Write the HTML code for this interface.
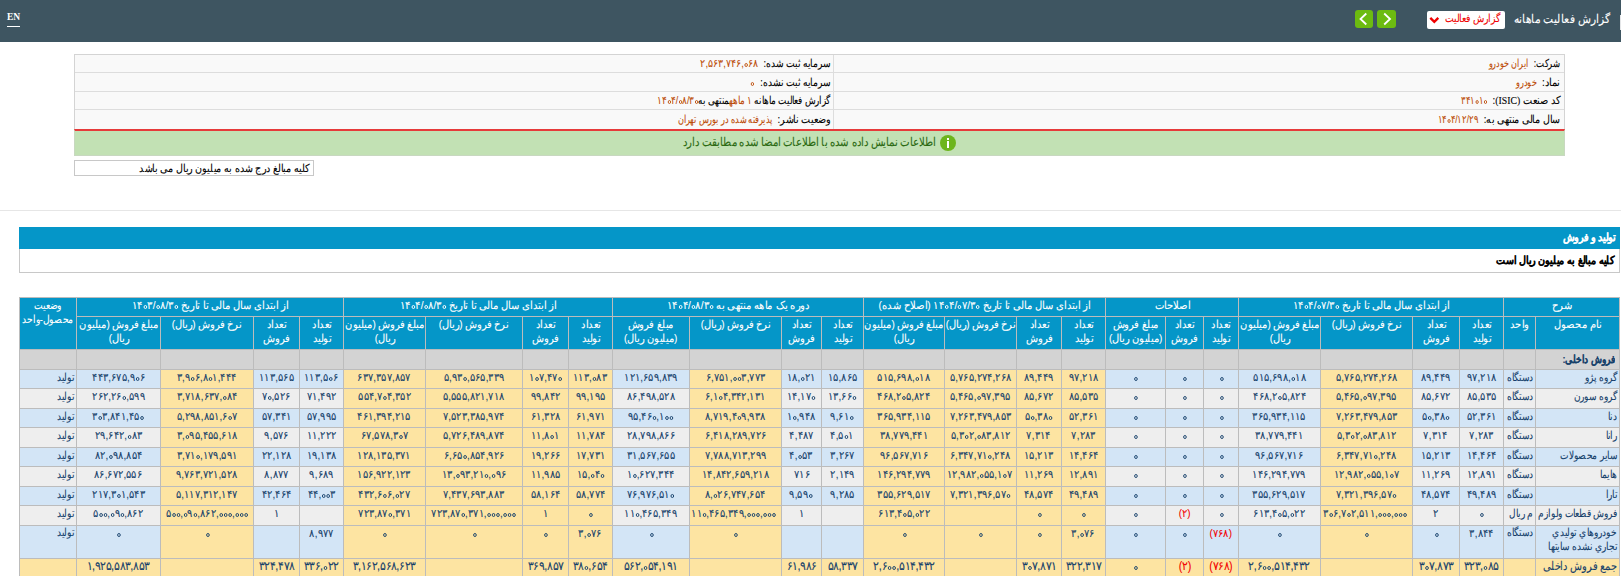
<!DOCTYPE html>
<html lang="fa" dir="rtl">
<head>
<meta charset="utf-8">
<title>گزارش فعالیت ماهانه</title>
<style>
html,body{margin:0;padding:0;}
body{width:1621px;height:576px;overflow:hidden;position:relative;background:#fff;font-family:"Liberation Sans",sans-serif;font-size:11px;color:#000;}
.a{position:absolute;overflow:hidden;}
.abs{position:absolute;white-space:nowrap;}
.s{display:inline-block;white-space:nowrap;-webkit-text-stroke:0.1px currentColor;}
.n{direction:ltr;unicode-bidi:isolate;}
.z{display:inline-block;width:4px;height:4px;border:1.1px solid currentColor;border-radius:50%;box-sizing:border-box;margin:0 .5px;vertical-align:0px;-webkit-text-stroke:0;}
</style>
</head>
<body>
<div class="abs" style="left:0;top:0;width:1621px;height:42px;background:#3e5561;"></div>
<div class="abs" style="left:7px;top:11px;font-family:'Liberation Serif',serif;font-size:9.5px;font-weight:bold;letter-spacing:-0.2px;color:#fff;line-height:12px;direction:ltr;">EN</div>
<div class="abs" style="left:7px;top:26px;width:13px;height:1px;background:#fff;"></div>
<div class="abs" style="right:10.5px;top:10.5px;line-height:16px;color:#fff;"><span class="s" style="font-size:12px;transform:scaleX(0.8880);transform-origin:100% 50%;">گزارش فعالیت ماهانه</span></div>
<div class="abs" style="left:1620px;top:15px;width:1px;height:15px;background:#e4e6e8;"></div>
<div class="abs" style="left:1427px;top:11px;width:78px;height:18px;background:#fff;border-radius:2px;"></div>
<div class="abs" style="right:121px;top:10.0px;line-height:16px;color:#f00000;"><span class="s" style="font-size:11px;transform:scaleX(0.8453);transform-origin:100% 50%;">گزارش فعالیت</span></div>
<div class="abs" style="left:1429px;top:16px;"><svg width="11" height="8" viewBox="0 0 11 8" style="display:block"><path d="M1.3 1.8 L5.3 5.8 L9.3 1.8" stroke="#f00000" stroke-width="2.4" fill="none"/></svg></div>
<div class="abs" style="left:1355px;top:10px;width:18px;height:18px;background:#6cbb10;border-radius:3px;"></div>
<div class="abs" style="left:1377px;top:10px;width:19px;height:18px;background:#6cbb10;border-radius:3px;"></div>
<div class="abs" style="left:1355px;top:10px;"><svg width="18" height="18" viewBox="0 0 18 18" style="display:block"><path d="M11.3 3.5 L5.5 9 L11.3 14.5" stroke="#fff" stroke-width="1.8" fill="none"/></svg></div>
<div class="abs" style="left:1377px;top:10px;"><svg width="19" height="18" viewBox="0 0 19 18" style="display:block"><path d="M7.2 3.5 L13 9 L7.2 14.5" stroke="#fff" stroke-width="1.8" fill="none"/></svg></div>
<div class="abs" style="left:74px;top:54px;width:1489px;height:74px;border:1px solid #d4d4d4;border-bottom:none;background:#f9f9f9;"></div>
<div class="abs" style="left:75px;top:72px;width:1489px;height:1px;background:#dddddd;"></div>
<div class="abs" style="left:75px;top:91px;width:1489px;height:1px;background:#dddddd;"></div>
<div class="abs" style="left:75px;top:109px;width:1489px;height:1px;background:#dddddd;"></div>
<div class="abs" style="left:833px;top:55px;width:1px;height:74px;background:#dddddd;"></div>
<div class="abs" style="right:61px;top:55.0px;line-height:16px;color:#000;"><span class="s" style="font-size:11px;transform:scaleX(0.7750);transform-origin:100% 50%;">شرکت:</span></div>
<div class="abs" style="right:92.79999999999995px;top:55.0px;line-height:16px;color:#bc4c08;"><span class="s" style="font-size:11px;transform:scaleX(0.7306);transform-origin:100% 50%;">ایران خودرو</span></div>
<div class="abs" style="right:61px;top:73.5px;line-height:16px;color:#000;"><span class="s" style="font-size:11px;transform:scaleX(0.8972);transform-origin:100% 50%;">نماد:</span></div>
<div class="abs" style="right:84.5px;top:73.5px;line-height:16px;color:#bc4c08;"><span class="s" style="font-size:11px;transform:scaleX(0.7357);transform-origin:100% 50%;">خودرو</span></div>
<div class="abs" style="right:61px;top:92.0px;line-height:16px;color:#000;"><span class="s" style="font-size:11px;transform:scaleX(0.8871);transform-origin:100% 50%;">کد صنعت <span style="font-family:'Liberation Serif',serif">(ISIC)</span>:</span></div>
<div class="abs" style="right:134.5px;top:92.0px;line-height:16px;color:#bc4c08;"><span class="s" style="font-size:11px;transform:scaleX(0.7588);transform-origin:100% 50%;"><span class="n">۳۴۱<i class="z"></i>۱<i class="z"></i></span></span></div>
<div class="abs" style="right:61px;top:110.5px;line-height:16px;color:#000;"><span class="s" style="font-size:11px;transform:scaleX(0.8670);transform-origin:100% 50%;">سال مالی منتهی به:</span></div>
<div class="abs" style="right:142.79999999999995px;top:110.5px;line-height:16px;color:#bc4c08;"><span class="s" style="font-size:11px;transform:scaleX(0.7624);transform-origin:100% 50%;"><span class="n">۱۴<i class="z"></i>۴/۱۲/۲۹</span></span></div>
<div class="abs" style="right:791px;top:55.0px;line-height:16px;color:#000;"><span class="s" style="font-size:11px;transform:scaleX(0.8307);transform-origin:100% 50%;">سرمایه ثبت شده:</span></div>
<div class="abs" style="right:863.2px;top:55.0px;line-height:16px;color:#bc4c08;"><span class="s" style="font-size:11px;transform:scaleX(0.8479);transform-origin:100% 50%;"><span class="n">۲,۵۶۳,۷۴۶,<i class="z"></i>۶۸</span></span></div>
<div class="abs" style="right:791px;top:73.5px;line-height:16px;color:#000;"><span class="s" style="font-size:11px;transform:scaleX(0.8316);transform-origin:100% 50%;">سرمایه ثبت نشده:</span></div>
<div class="abs" style="right:867px;top:73.5px;line-height:16px;color:#bc4c08;"><span class="s" style="font-size:11px;transform:scaleX(0.8);transform-origin:100% 50%;"><span class="n"><i class="z"></i></span></span></div>
<div class="abs" style="right:791px;top:110.5px;line-height:16px;color:#000;"><span class="s" style="font-size:11px;transform:scaleX(0.8732);transform-origin:100% 50%;">وضعیت ناشر:</span></div>
<div class="abs" style="right:849px;top:110.5px;line-height:16px;color:#bc4c08;"><span class="s" style="font-size:11px;transform:scaleX(0.7427);transform-origin:100% 50%;">پذیرفته شده در بورس تهران</span></div>
<div class="abs" style="right:791px;top:92.0px;line-height:16px;color:#000;"><span class="s" style="font-size:11px;transform:scaleX(0.7994);transform-origin:100% 50%;">گزارش فعالیت ماهانه <span style="color:#bc4c08">۱ ماهه</span>منتهی به<span style="color:#bc4c08"><span class="n">۱۴<i class="z"></i>۴/<i class="z"></i>۸/۳<i class="z"></i></span></span></span></div>
<div class="abs" style="left:74px;top:129px;width:1489px;height:24px;background:#c2e1b4;border:1px solid #c8d8c0;border-top:2px solid #e63a3a;"></div>
<div class="abs" style="left:940px;top:135px;width:16px;height:16px;border-radius:50%;background:#6db51d;"></div>
<div class="abs" style="left:947px;top:138px;width:2px;height:2px;background:#fff;"></div>
<div class="abs" style="left:947px;top:141px;width:2px;height:7px;background:#fff;"></div>
<div class="abs" style="right:684.5px;top:134.0px;line-height:16px;color:#2b6a12;"><span class="s" style="font-size:12px;transform:scaleX(0.8461);transform-origin:100% 50%;">اطلاعات نمایش داده شده با اطلاعات امضا شده مطابقت دارد</span></div>
<div class="abs" style="left:74px;top:160px;width:238px;height:14px;border:1px solid #c8c8c8;background:#fff;"></div>
<div class="abs" style="right:1311.5px;top:160.0px;line-height:16px;color:#000;"><span class="s" style="font-size:11px;transform:scaleX(0.8698);transform-origin:100% 50%;">کلیه مبالغ درج شده به میلیون ریال می باشد</span></div>
<div class="abs" style="left:0;top:210px;width:1621px;height:1px;background:#e6e6e6;"></div>
<div class="abs" style="left:19px;top:227px;width:1601px;height:22px;background:#0596c8;"></div>
<div class="abs" style="right:4.5px;top:228.5px;line-height:16px;color:#fff;"><span class="s" style="font-size:11px;transform:scaleX(0.8720);transform-origin:100% 50%;font-weight:bold;">تولید و فروش</span></div>
<div class="abs" style="left:19px;top:249px;width:1599px;height:23px;border:1px solid #c8c8c8;border-top:none;background:#fff;"></div>
<div class="abs" style="right:6.5px;top:251.5px;line-height:16px;color:#000;"><span class="s" style="font-size:11px;transform:scaleX(0.8723);transform-origin:100% 50%;font-weight:bold;">کلیه مبالغ به میلیون ریال است</span></div>
<div class="a" style="left:19px;top:297px;width:1601px;height:283px;background:#bcbcbc"></div>
<div class="a" style="left:20px;top:298px;width:56px;height:51px;background:#0596c8;color:#fff;text-align:center;display:flex;justify-content:center;align-items:flex-start;box-sizing:border-box;"><span class="s" style="font-size:11px;transform:scaleX(0.83);transform-origin:50% 50%;line-height:14px;white-space:nowrap;text-align:center">وضعیت<br>محصول-واحد</span></div>
<div class="a" style="left:77px;top:298px;width:266px;height:18px;background:#0596c8;color:#fff;text-align:center;line-height:15px;"><span class="s" style="font-size:11px;transform:scaleX(0.91);transform-origin:50% 50%;">از ابتدای سال مالی تا تاریخ <span class="n">۱۴<i class="z"></i>۳/<i class="z"></i>۸/۳<i class="z"></i></span></span></div>
<div class="a" style="left:344px;top:298px;width:268px;height:18px;background:#0596c8;color:#fff;text-align:center;line-height:15px;"><span class="s" style="font-size:11px;transform:scaleX(0.91);transform-origin:50% 50%;">از ابتدای سال مالی تا تاریخ <span class="n">۱۴<i class="z"></i>۴/<i class="z"></i>۸/۳<i class="z"></i></span></span></div>
<div class="a" style="left:613px;top:298px;width:250px;height:18px;background:#0596c8;color:#fff;text-align:center;line-height:15px;"><span class="s" style="font-size:11px;transform:scaleX(0.91);transform-origin:50% 50%;">دوره یک ماهه منتهی به <span class="n">۱۴<i class="z"></i>۴/<i class="z"></i>۸/۳<i class="z"></i></span></span></div>
<div class="a" style="left:864px;top:298px;width:241px;height:18px;background:#0596c8;color:#fff;text-align:center;line-height:15px;"><span class="s" style="font-size:11px;transform:scaleX(0.91);transform-origin:50% 50%;">از ابتدای سال مالی تا تاریخ <span class="n">۱۴<i class="z"></i>۴/<i class="z"></i>۷/۳<i class="z"></i></span> (اصلاح شده)</span></div>
<div class="a" style="left:1106px;top:298px;width:132px;height:18px;background:#0596c8;color:#fff;text-align:center;line-height:15px;"><span class="s" style="font-size:11px;transform:scaleX(0.91);transform-origin:50% 50%;">اصلاحات</span></div>
<div class="a" style="left:1239px;top:298px;width:264px;height:18px;background:#0596c8;color:#fff;text-align:center;line-height:15px;"><span class="s" style="font-size:11px;transform:scaleX(0.91);transform-origin:50% 50%;">از ابتدای سال مالی تا تاریخ <span class="n">۱۴<i class="z"></i>۴/<i class="z"></i>۷/۳<i class="z"></i></span></span></div>
<div class="a" style="left:1504px;top:298px;width:115px;height:18px;background:#0596c8;color:#fff;text-align:center;line-height:15px;"><span class="s" style="font-size:11px;transform:scaleX(0.91);transform-origin:50% 50%;">شرح</span></div>
<div class="a" style="left:77px;top:317px;width:83px;height:32px;background:#0596c8;color:#fff;text-align:center;display:flex;justify-content:center;align-items:flex-start;box-sizing:border-box;"><span class="s" style="font-size:11px;transform:scaleX(0.9);transform-origin:50% 50%;line-height:14.4px;position:relative;top:-0.5px">مبلغ فروش (میلیون<br>ریال)</span></div>
<div class="a" style="left:161px;top:317px;width:92px;height:32px;background:#0596c8;color:#fff;text-align:center;display:flex;justify-content:center;align-items:flex-start;box-sizing:border-box;"><span class="s" style="font-size:11px;transform:scaleX(0.9);transform-origin:50% 50%;line-height:14.4px;position:relative;top:-0.5px">نرخ فروش (ریال)</span></div>
<div class="a" style="left:254px;top:317px;width:45px;height:32px;background:#0596c8;color:#fff;text-align:center;display:flex;justify-content:center;align-items:flex-start;box-sizing:border-box;"><span class="s" style="font-size:11px;transform:scaleX(0.9);transform-origin:50% 50%;line-height:14.4px;position:relative;top:-0.5px">تعداد<br>فروش</span></div>
<div class="a" style="left:300px;top:317px;width:43px;height:32px;background:#0596c8;color:#fff;text-align:center;display:flex;justify-content:center;align-items:flex-start;box-sizing:border-box;"><span class="s" style="font-size:11px;transform:scaleX(0.9);transform-origin:50% 50%;line-height:14.4px;position:relative;top:-0.5px">تعداد<br>تولید</span></div>
<div class="a" style="left:344px;top:317px;width:81px;height:32px;background:#0596c8;color:#fff;text-align:center;display:flex;justify-content:center;align-items:flex-start;box-sizing:border-box;"><span class="s" style="font-size:11px;transform:scaleX(0.9);transform-origin:50% 50%;line-height:14.4px;position:relative;top:-0.5px">مبلغ فروش (میلیون<br>ریال)</span></div>
<div class="a" style="left:426px;top:317px;width:96px;height:32px;background:#0596c8;color:#fff;text-align:center;display:flex;justify-content:center;align-items:flex-start;box-sizing:border-box;"><span class="s" style="font-size:11px;transform:scaleX(0.9);transform-origin:50% 50%;line-height:14.4px;position:relative;top:-0.5px">نرخ فروش (ریال)</span></div>
<div class="a" style="left:523px;top:317px;width:45px;height:32px;background:#0596c8;color:#fff;text-align:center;display:flex;justify-content:center;align-items:flex-start;box-sizing:border-box;"><span class="s" style="font-size:11px;transform:scaleX(0.9);transform-origin:50% 50%;line-height:14.4px;position:relative;top:-0.5px">تعداد<br>فروش</span></div>
<div class="a" style="left:569px;top:317px;width:43px;height:32px;background:#0596c8;color:#fff;text-align:center;display:flex;justify-content:center;align-items:flex-start;box-sizing:border-box;"><span class="s" style="font-size:11px;transform:scaleX(0.9);transform-origin:50% 50%;line-height:14.4px;position:relative;top:-0.5px">تعداد<br>تولید</span></div>
<div class="a" style="left:613px;top:317px;width:76px;height:32px;background:#0596c8;color:#fff;text-align:center;display:flex;justify-content:center;align-items:flex-start;box-sizing:border-box;"><span class="s" style="font-size:11px;transform:scaleX(0.9);transform-origin:50% 50%;line-height:14.4px;position:relative;top:-0.5px">مبلغ فروش<br>(میلیون ریال)</span></div>
<div class="a" style="left:690px;top:317px;width:91px;height:32px;background:#0596c8;color:#fff;text-align:center;display:flex;justify-content:center;align-items:flex-start;box-sizing:border-box;"><span class="s" style="font-size:11px;transform:scaleX(0.9);transform-origin:50% 50%;line-height:14.4px;position:relative;top:-0.5px">نرخ فروش (ریال)</span></div>
<div class="a" style="left:782px;top:317px;width:39px;height:32px;background:#0596c8;color:#fff;text-align:center;display:flex;justify-content:center;align-items:flex-start;box-sizing:border-box;"><span class="s" style="font-size:11px;transform:scaleX(0.9);transform-origin:50% 50%;line-height:14.4px;position:relative;top:-0.5px">تعداد<br>فروش</span></div>
<div class="a" style="left:822px;top:317px;width:41px;height:32px;background:#0596c8;color:#fff;text-align:center;display:flex;justify-content:center;align-items:flex-start;box-sizing:border-box;"><span class="s" style="font-size:11px;transform:scaleX(0.9);transform-origin:50% 50%;line-height:14.4px;position:relative;top:-0.5px">تعداد<br>تولید</span></div>
<div class="a" style="left:864px;top:317px;width:80px;height:32px;background:#0596c8;color:#fff;text-align:center;display:flex;justify-content:center;align-items:flex-start;box-sizing:border-box;"><span class="s" style="font-size:11px;transform:scaleX(0.9);transform-origin:50% 50%;line-height:14.4px;position:relative;top:-0.5px">مبلغ فروش (میلیون<br>ریال)</span></div>
<div class="a" style="left:945px;top:317px;width:71px;height:32px;background:#0596c8;color:#fff;text-align:center;display:flex;justify-content:center;align-items:flex-start;box-sizing:border-box;"><span class="s" style="font-size:11px;transform:scaleX(0.9);transform-origin:50% 50%;line-height:14.4px;position:relative;top:-0.5px">نرخ فروش (ریال)</span></div>
<div class="a" style="left:1017px;top:317px;width:44px;height:32px;background:#0596c8;color:#fff;text-align:center;display:flex;justify-content:center;align-items:flex-start;box-sizing:border-box;"><span class="s" style="font-size:11px;transform:scaleX(0.9);transform-origin:50% 50%;line-height:14.4px;position:relative;top:-0.5px">تعداد<br>فروش</span></div>
<div class="a" style="left:1062px;top:317px;width:43px;height:32px;background:#0596c8;color:#fff;text-align:center;display:flex;justify-content:center;align-items:flex-start;box-sizing:border-box;"><span class="s" style="font-size:11px;transform:scaleX(0.9);transform-origin:50% 50%;line-height:14.4px;position:relative;top:-0.5px">تعداد<br>تولید</span></div>
<div class="a" style="left:1106px;top:317px;width:59px;height:32px;background:#0596c8;color:#fff;text-align:center;display:flex;justify-content:center;align-items:flex-start;box-sizing:border-box;"><span class="s" style="font-size:11px;transform:scaleX(0.9);transform-origin:50% 50%;line-height:14.4px;position:relative;top:-0.5px">مبلغ فروش<br>(میلیون ریال)</span></div>
<div class="a" style="left:1166px;top:317px;width:37px;height:32px;background:#0596c8;color:#fff;text-align:center;display:flex;justify-content:center;align-items:flex-start;box-sizing:border-box;"><span class="s" style="font-size:11px;transform:scaleX(0.9);transform-origin:50% 50%;line-height:14.4px;position:relative;top:-0.5px">تعداد<br>فروش</span></div>
<div class="a" style="left:1204px;top:317px;width:34px;height:32px;background:#0596c8;color:#fff;text-align:center;display:flex;justify-content:center;align-items:flex-start;box-sizing:border-box;"><span class="s" style="font-size:11px;transform:scaleX(0.9);transform-origin:50% 50%;line-height:14.4px;position:relative;top:-0.5px">تعداد<br>تولید</span></div>
<div class="a" style="left:1239px;top:317px;width:81px;height:32px;background:#0596c8;color:#fff;text-align:center;display:flex;justify-content:center;align-items:flex-start;box-sizing:border-box;"><span class="s" style="font-size:11px;transform:scaleX(0.9);transform-origin:50% 50%;line-height:14.4px;position:relative;top:-0.5px">مبلغ فروش (میلیون<br>ریال)</span></div>
<div class="a" style="left:1321px;top:317px;width:91px;height:32px;background:#0596c8;color:#fff;text-align:center;display:flex;justify-content:center;align-items:flex-start;box-sizing:border-box;"><span class="s" style="font-size:11px;transform:scaleX(0.9);transform-origin:50% 50%;line-height:14.4px;position:relative;top:-0.5px">نرخ فروش (ریال)</span></div>
<div class="a" style="left:1413px;top:317px;width:46px;height:32px;background:#0596c8;color:#fff;text-align:center;display:flex;justify-content:center;align-items:flex-start;box-sizing:border-box;"><span class="s" style="font-size:11px;transform:scaleX(0.9);transform-origin:50% 50%;line-height:14.4px;position:relative;top:-0.5px">تعداد<br>فروش</span></div>
<div class="a" style="left:1460px;top:317px;width:43px;height:32px;background:#0596c8;color:#fff;text-align:center;display:flex;justify-content:center;align-items:flex-start;box-sizing:border-box;"><span class="s" style="font-size:11px;transform:scaleX(0.9);transform-origin:50% 50%;line-height:14.4px;position:relative;top:-0.5px">تعداد<br>تولید</span></div>
<div class="a" style="left:1504px;top:317px;width:31px;height:32px;background:#0596c8;color:#fff;text-align:center;display:flex;justify-content:center;align-items:flex-start;box-sizing:border-box;"><span class="s" style="font-size:11px;transform:scaleX(0.9);transform-origin:50% 50%;line-height:14.4px;position:relative;top:-0.5px">واحد</span></div>
<div class="a" style="left:1536px;top:317px;width:83px;height:32px;background:#0596c8;color:#fff;text-align:center;display:flex;justify-content:center;align-items:flex-start;box-sizing:border-box;"><span class="s" style="font-size:11px;transform:scaleX(0.9);transform-origin:50% 50%;line-height:14.4px;position:relative;top:-0.5px">نام محصول</span></div>
<div class="a" style="left:20px;top:350px;width:56px;height:19px;background:#d3d3d3;color:#15406a;text-align:right;padding-right:4px;box-sizing:border-box;line-height:18px;"></div>
<div class="a" style="left:77px;top:350px;width:83px;height:19px;background:#d3d3d3;color:#15406a;text-align:right;padding-right:4px;box-sizing:border-box;line-height:18px;"></div>
<div class="a" style="left:161px;top:350px;width:92px;height:19px;background:#d3d3d3;color:#15406a;text-align:right;padding-right:4px;box-sizing:border-box;line-height:18px;"></div>
<div class="a" style="left:254px;top:350px;width:45px;height:19px;background:#d3d3d3;color:#15406a;text-align:right;padding-right:4px;box-sizing:border-box;line-height:18px;"></div>
<div class="a" style="left:300px;top:350px;width:43px;height:19px;background:#d3d3d3;color:#15406a;text-align:right;padding-right:4px;box-sizing:border-box;line-height:18px;"></div>
<div class="a" style="left:344px;top:350px;width:81px;height:19px;background:#d3d3d3;color:#15406a;text-align:right;padding-right:4px;box-sizing:border-box;line-height:18px;"></div>
<div class="a" style="left:426px;top:350px;width:96px;height:19px;background:#d3d3d3;color:#15406a;text-align:right;padding-right:4px;box-sizing:border-box;line-height:18px;"></div>
<div class="a" style="left:523px;top:350px;width:45px;height:19px;background:#d3d3d3;color:#15406a;text-align:right;padding-right:4px;box-sizing:border-box;line-height:18px;"></div>
<div class="a" style="left:569px;top:350px;width:43px;height:19px;background:#d3d3d3;color:#15406a;text-align:right;padding-right:4px;box-sizing:border-box;line-height:18px;"></div>
<div class="a" style="left:613px;top:350px;width:76px;height:19px;background:#d3d3d3;color:#15406a;text-align:right;padding-right:4px;box-sizing:border-box;line-height:18px;"></div>
<div class="a" style="left:690px;top:350px;width:91px;height:19px;background:#d3d3d3;color:#15406a;text-align:right;padding-right:4px;box-sizing:border-box;line-height:18px;"></div>
<div class="a" style="left:782px;top:350px;width:39px;height:19px;background:#d3d3d3;color:#15406a;text-align:right;padding-right:4px;box-sizing:border-box;line-height:18px;"></div>
<div class="a" style="left:822px;top:350px;width:41px;height:19px;background:#d3d3d3;color:#15406a;text-align:right;padding-right:4px;box-sizing:border-box;line-height:18px;"></div>
<div class="a" style="left:864px;top:350px;width:80px;height:19px;background:#d3d3d3;color:#15406a;text-align:right;padding-right:4px;box-sizing:border-box;line-height:18px;"></div>
<div class="a" style="left:945px;top:350px;width:71px;height:19px;background:#d3d3d3;color:#15406a;text-align:right;padding-right:4px;box-sizing:border-box;line-height:18px;"></div>
<div class="a" style="left:1017px;top:350px;width:44px;height:19px;background:#d3d3d3;color:#15406a;text-align:right;padding-right:4px;box-sizing:border-box;line-height:18px;"></div>
<div class="a" style="left:1062px;top:350px;width:43px;height:19px;background:#d3d3d3;color:#15406a;text-align:right;padding-right:4px;box-sizing:border-box;line-height:18px;"></div>
<div class="a" style="left:1106px;top:350px;width:59px;height:19px;background:#d3d3d3;color:#15406a;text-align:right;padding-right:4px;box-sizing:border-box;line-height:18px;"></div>
<div class="a" style="left:1166px;top:350px;width:37px;height:19px;background:#d3d3d3;color:#15406a;text-align:right;padding-right:4px;box-sizing:border-box;line-height:18px;"></div>
<div class="a" style="left:1204px;top:350px;width:34px;height:19px;background:#d3d3d3;color:#15406a;text-align:right;padding-right:4px;box-sizing:border-box;line-height:18px;"></div>
<div class="a" style="left:1239px;top:350px;width:81px;height:19px;background:#d3d3d3;color:#15406a;text-align:right;padding-right:4px;box-sizing:border-box;line-height:18px;"></div>
<div class="a" style="left:1321px;top:350px;width:91px;height:19px;background:#d3d3d3;color:#15406a;text-align:right;padding-right:4px;box-sizing:border-box;line-height:18px;"></div>
<div class="a" style="left:1413px;top:350px;width:46px;height:19px;background:#d3d3d3;color:#15406a;text-align:right;padding-right:4px;box-sizing:border-box;line-height:18px;"></div>
<div class="a" style="left:1460px;top:350px;width:43px;height:19px;background:#d3d3d3;color:#15406a;text-align:right;padding-right:4px;box-sizing:border-box;line-height:18px;"></div>
<div class="a" style="left:1504px;top:350px;width:31px;height:19px;background:#d3d3d3;color:#15406a;text-align:right;padding-right:4px;box-sizing:border-box;line-height:18px;"></div>
<div class="a" style="left:1536px;top:350px;width:83px;height:19px;background:#d3d3d3;color:#15406a;text-align:right;padding-right:4px;box-sizing:border-box;line-height:18px;"><span class="s" style="font-size:11px;transform:scaleX(0.82);transform-origin:100% 50%;font-weight:bold">فروش داخلی:</span></div>
<div class="a" style="left:1536px;top:370px;width:83px;height:18px;background:#d3e5f6;color:#15406a;text-align:right;padding:0 2px 0 0;box-sizing:border-box;"><span class="s" style="font-size:11px;transform:scaleX(0.82);transform-origin:100% 50%;line-height:15px">گروه پژو</span></div>
<div class="a" style="left:1504px;top:370px;width:31px;height:18px;background:#d3e5f6;color:#15406a;text-align:right;padding:0 2px 0 0;box-sizing:border-box;"><span class="s" style="font-size:11px;transform:scaleX(0.82);transform-origin:100% 50%;line-height:15px">دستگاه</span></div>
<div class="a" style="left:1460px;top:370px;width:43px;height:18px;background:#d3e5f6;color:#15406a;text-align:center;padding-top:0px;box-sizing:border-box;"><span class="s" style="font-size:11px;transform:scaleX(0.89);transform-origin:50% 50%;line-height:15px"><span class="n">۹۷,۲۱۸</span></span></div>
<div class="a" style="left:1413px;top:370px;width:46px;height:18px;background:#d3e5f6;color:#15406a;text-align:center;padding-top:0px;box-sizing:border-box;"><span class="s" style="font-size:11px;transform:scaleX(0.89);transform-origin:50% 50%;line-height:15px"><span class="n">۸۹,۴۴۹</span></span></div>
<div class="a" style="left:1321px;top:370px;width:91px;height:18px;background:#fde4a2;color:#15406a;text-align:center;padding-top:0px;box-sizing:border-box;"><span class="s" style="font-size:11px;transform:scaleX(0.89);transform-origin:50% 50%;line-height:15px"><span class="n">۵,۷۶۵,۲۷۴,۲۶۸</span></span></div>
<div class="a" style="left:1239px;top:370px;width:81px;height:18px;background:#d3e5f6;color:#15406a;text-align:center;padding-top:0px;box-sizing:border-box;"><span class="s" style="font-size:11px;transform:scaleX(0.89);transform-origin:50% 50%;line-height:15px"><span class="n">۵۱۵,۶۹۸,<i class="z"></i>۱۸</span></span></div>
<div class="a" style="left:1204px;top:370px;width:34px;height:18px;background:#d3e5f6;color:#15406a;text-align:center;padding-top:0px;box-sizing:border-box;"><span class="s" style="font-size:11px;transform:scaleX(0.89);transform-origin:50% 50%;line-height:15px"><span class="n"><i class="z"></i></span></span></div>
<div class="a" style="left:1166px;top:370px;width:37px;height:18px;background:#d3e5f6;color:#15406a;text-align:center;padding-top:0px;box-sizing:border-box;"><span class="s" style="font-size:11px;transform:scaleX(0.89);transform-origin:50% 50%;line-height:15px"><span class="n"><i class="z"></i></span></span></div>
<div class="a" style="left:1106px;top:370px;width:59px;height:18px;background:#d3e5f6;color:#15406a;text-align:center;padding-top:0px;box-sizing:border-box;"><span class="s" style="font-size:11px;transform:scaleX(0.89);transform-origin:50% 50%;line-height:15px"><span class="n"><i class="z"></i></span></span></div>
<div class="a" style="left:1062px;top:370px;width:43px;height:18px;background:#fde4a2;color:#15406a;text-align:center;padding-top:0px;box-sizing:border-box;"><span class="s" style="font-size:11px;transform:scaleX(0.89);transform-origin:50% 50%;line-height:15px"><span class="n">۹۷,۲۱۸</span></span></div>
<div class="a" style="left:1017px;top:370px;width:44px;height:18px;background:#fde4a2;color:#15406a;text-align:center;padding-top:0px;box-sizing:border-box;"><span class="s" style="font-size:11px;transform:scaleX(0.89);transform-origin:50% 50%;line-height:15px"><span class="n">۸۹,۴۴۹</span></span></div>
<div class="a" style="left:945px;top:370px;width:71px;height:18px;background:#fde4a2;color:#15406a;text-align:center;padding-top:0px;box-sizing:border-box;"><span class="s" style="font-size:11px;transform:scaleX(0.89);transform-origin:50% 50%;line-height:15px"><span class="n">۵,۷۶۵,۲۷۴,۲۶۸</span></span></div>
<div class="a" style="left:864px;top:370px;width:80px;height:18px;background:#fde4a2;color:#15406a;text-align:center;padding-top:0px;box-sizing:border-box;"><span class="s" style="font-size:11px;transform:scaleX(0.89);transform-origin:50% 50%;line-height:15px"><span class="n">۵۱۵,۶۹۸,<i class="z"></i>۱۸</span></span></div>
<div class="a" style="left:822px;top:370px;width:41px;height:18px;background:#d3e5f6;color:#15406a;text-align:center;padding-top:0px;box-sizing:border-box;"><span class="s" style="font-size:11px;transform:scaleX(0.89);transform-origin:50% 50%;line-height:15px"><span class="n">۱۵,۸۶۵</span></span></div>
<div class="a" style="left:782px;top:370px;width:39px;height:18px;background:#d3e5f6;color:#15406a;text-align:center;padding-top:0px;box-sizing:border-box;"><span class="s" style="font-size:11px;transform:scaleX(0.89);transform-origin:50% 50%;line-height:15px"><span class="n">۱۸,<i class="z"></i>۲۱</span></span></div>
<div class="a" style="left:690px;top:370px;width:91px;height:18px;background:#fde4a2;color:#15406a;text-align:center;padding-top:0px;box-sizing:border-box;"><span class="s" style="font-size:11px;transform:scaleX(0.89);transform-origin:50% 50%;line-height:15px"><span class="n">۶,۷۵۱,<i class="z"></i><i class="z"></i>۳,۷۷۳</span></span></div>
<div class="a" style="left:613px;top:370px;width:76px;height:18px;background:#d3e5f6;color:#15406a;text-align:center;padding-top:0px;box-sizing:border-box;"><span class="s" style="font-size:11px;transform:scaleX(0.89);transform-origin:50% 50%;line-height:15px"><span class="n">۱۲۱,۶۵۹,۸۳۹</span></span></div>
<div class="a" style="left:569px;top:370px;width:43px;height:18px;background:#fde4a2;color:#15406a;text-align:center;padding-top:0px;box-sizing:border-box;"><span class="s" style="font-size:11px;transform:scaleX(0.89);transform-origin:50% 50%;line-height:15px"><span class="n">۱۱۳,<i class="z"></i>۸۳</span></span></div>
<div class="a" style="left:523px;top:370px;width:45px;height:18px;background:#fde4a2;color:#15406a;text-align:center;padding-top:0px;box-sizing:border-box;"><span class="s" style="font-size:11px;transform:scaleX(0.89);transform-origin:50% 50%;line-height:15px"><span class="n">۱<i class="z"></i>۷,۴۷<i class="z"></i></span></span></div>
<div class="a" style="left:426px;top:370px;width:96px;height:18px;background:#fde4a2;color:#15406a;text-align:center;padding-top:0px;box-sizing:border-box;"><span class="s" style="font-size:11px;transform:scaleX(0.89);transform-origin:50% 50%;line-height:15px"><span class="n">۵,۹۳<i class="z"></i>,۵۶۵,۳۳۹</span></span></div>
<div class="a" style="left:344px;top:370px;width:81px;height:18px;background:#fde4a2;color:#15406a;text-align:center;padding-top:0px;box-sizing:border-box;"><span class="s" style="font-size:11px;transform:scaleX(0.89);transform-origin:50% 50%;line-height:15px"><span class="n">۶۳۷,۳۵۷,۸۵۷</span></span></div>
<div class="a" style="left:300px;top:370px;width:43px;height:18px;background:#d3e5f6;color:#15406a;text-align:center;padding-top:0px;box-sizing:border-box;"><span class="s" style="font-size:11px;transform:scaleX(0.89);transform-origin:50% 50%;line-height:15px"><span class="n">۱۱۳,۵<i class="z"></i>۶</span></span></div>
<div class="a" style="left:254px;top:370px;width:45px;height:18px;background:#d3e5f6;color:#15406a;text-align:center;padding-top:0px;box-sizing:border-box;"><span class="s" style="font-size:11px;transform:scaleX(0.89);transform-origin:50% 50%;line-height:15px"><span class="n">۱۱۳,۵۶۵</span></span></div>
<div class="a" style="left:161px;top:370px;width:92px;height:18px;background:#fde4a2;color:#15406a;text-align:center;padding-top:0px;box-sizing:border-box;"><span class="s" style="font-size:11px;transform:scaleX(0.89);transform-origin:50% 50%;line-height:15px"><span class="n">۳,۹<i class="z"></i>۶,۸<i class="z"></i>۱,۴۴۴</span></span></div>
<div class="a" style="left:77px;top:370px;width:83px;height:18px;background:#d3e5f6;color:#15406a;text-align:center;padding-top:0px;box-sizing:border-box;"><span class="s" style="font-size:11px;transform:scaleX(0.89);transform-origin:50% 50%;line-height:15px"><span class="n">۴۴۳,۶۷۵,۹<i class="z"></i>۶</span></span></div>
<div class="a" style="left:20px;top:370px;width:56px;height:18px;background:#d3e5f6;color:#15406a;text-align:right;padding:0 2px 0 0;box-sizing:border-box;"><span class="s" style="font-size:11px;transform:scaleX(0.82);transform-origin:100% 50%;line-height:15px">تولید</span></div>
<div class="a" style="left:1536px;top:389px;width:83px;height:19px;background:#eeeeee;color:#15406a;text-align:right;padding:0 2px 0 0;box-sizing:border-box;"><span class="s" style="font-size:11px;transform:scaleX(0.82);transform-origin:100% 50%;line-height:15px">گروه سورن</span></div>
<div class="a" style="left:1504px;top:389px;width:31px;height:19px;background:#eeeeee;color:#15406a;text-align:right;padding:0 2px 0 0;box-sizing:border-box;"><span class="s" style="font-size:11px;transform:scaleX(0.82);transform-origin:100% 50%;line-height:15px">دستگاه</span></div>
<div class="a" style="left:1460px;top:389px;width:43px;height:19px;background:#eeeeee;color:#15406a;text-align:center;padding-top:0px;box-sizing:border-box;"><span class="s" style="font-size:11px;transform:scaleX(0.89);transform-origin:50% 50%;line-height:15px"><span class="n">۸۵,۵۳۵</span></span></div>
<div class="a" style="left:1413px;top:389px;width:46px;height:19px;background:#eeeeee;color:#15406a;text-align:center;padding-top:0px;box-sizing:border-box;"><span class="s" style="font-size:11px;transform:scaleX(0.89);transform-origin:50% 50%;line-height:15px"><span class="n">۸۵,۶۷۲</span></span></div>
<div class="a" style="left:1321px;top:389px;width:91px;height:19px;background:#fde4a2;color:#15406a;text-align:center;padding-top:0px;box-sizing:border-box;"><span class="s" style="font-size:11px;transform:scaleX(0.89);transform-origin:50% 50%;line-height:15px"><span class="n">۵,۴۶۵,<i class="z"></i>۹۷,۳۹۵</span></span></div>
<div class="a" style="left:1239px;top:389px;width:81px;height:19px;background:#eeeeee;color:#15406a;text-align:center;padding-top:0px;box-sizing:border-box;"><span class="s" style="font-size:11px;transform:scaleX(0.89);transform-origin:50% 50%;line-height:15px"><span class="n">۴۶۸,۲<i class="z"></i>۵,۸۲۴</span></span></div>
<div class="a" style="left:1204px;top:389px;width:34px;height:19px;background:#eeeeee;color:#15406a;text-align:center;padding-top:0px;box-sizing:border-box;"><span class="s" style="font-size:11px;transform:scaleX(0.89);transform-origin:50% 50%;line-height:15px"><span class="n"><i class="z"></i></span></span></div>
<div class="a" style="left:1166px;top:389px;width:37px;height:19px;background:#eeeeee;color:#15406a;text-align:center;padding-top:0px;box-sizing:border-box;"><span class="s" style="font-size:11px;transform:scaleX(0.89);transform-origin:50% 50%;line-height:15px"><span class="n"><i class="z"></i></span></span></div>
<div class="a" style="left:1106px;top:389px;width:59px;height:19px;background:#eeeeee;color:#15406a;text-align:center;padding-top:0px;box-sizing:border-box;"><span class="s" style="font-size:11px;transform:scaleX(0.89);transform-origin:50% 50%;line-height:15px"><span class="n"><i class="z"></i></span></span></div>
<div class="a" style="left:1062px;top:389px;width:43px;height:19px;background:#fde4a2;color:#15406a;text-align:center;padding-top:0px;box-sizing:border-box;"><span class="s" style="font-size:11px;transform:scaleX(0.89);transform-origin:50% 50%;line-height:15px"><span class="n">۸۵,۵۳۵</span></span></div>
<div class="a" style="left:1017px;top:389px;width:44px;height:19px;background:#fde4a2;color:#15406a;text-align:center;padding-top:0px;box-sizing:border-box;"><span class="s" style="font-size:11px;transform:scaleX(0.89);transform-origin:50% 50%;line-height:15px"><span class="n">۸۵,۶۷۲</span></span></div>
<div class="a" style="left:945px;top:389px;width:71px;height:19px;background:#fde4a2;color:#15406a;text-align:center;padding-top:0px;box-sizing:border-box;"><span class="s" style="font-size:11px;transform:scaleX(0.89);transform-origin:50% 50%;line-height:15px"><span class="n">۵,۴۶۵,<i class="z"></i>۹۷,۳۹۵</span></span></div>
<div class="a" style="left:864px;top:389px;width:80px;height:19px;background:#fde4a2;color:#15406a;text-align:center;padding-top:0px;box-sizing:border-box;"><span class="s" style="font-size:11px;transform:scaleX(0.89);transform-origin:50% 50%;line-height:15px"><span class="n">۴۶۸,۲<i class="z"></i>۵,۸۲۴</span></span></div>
<div class="a" style="left:822px;top:389px;width:41px;height:19px;background:#eeeeee;color:#15406a;text-align:center;padding-top:0px;box-sizing:border-box;"><span class="s" style="font-size:11px;transform:scaleX(0.89);transform-origin:50% 50%;line-height:15px"><span class="n">۱۳,۶۶<i class="z"></i></span></span></div>
<div class="a" style="left:782px;top:389px;width:39px;height:19px;background:#eeeeee;color:#15406a;text-align:center;padding-top:0px;box-sizing:border-box;"><span class="s" style="font-size:11px;transform:scaleX(0.89);transform-origin:50% 50%;line-height:15px"><span class="n">۱۴,۱۷<i class="z"></i></span></span></div>
<div class="a" style="left:690px;top:389px;width:91px;height:19px;background:#fde4a2;color:#15406a;text-align:center;padding-top:0px;box-sizing:border-box;"><span class="s" style="font-size:11px;transform:scaleX(0.89);transform-origin:50% 50%;line-height:15px"><span class="n">۶,۱<i class="z"></i>۴,۳۴۲,۱۳۱</span></span></div>
<div class="a" style="left:613px;top:389px;width:76px;height:19px;background:#eeeeee;color:#15406a;text-align:center;padding-top:0px;box-sizing:border-box;"><span class="s" style="font-size:11px;transform:scaleX(0.89);transform-origin:50% 50%;line-height:15px"><span class="n">۸۶,۴۹۸,۵۲۸</span></span></div>
<div class="a" style="left:569px;top:389px;width:43px;height:19px;background:#fde4a2;color:#15406a;text-align:center;padding-top:0px;box-sizing:border-box;"><span class="s" style="font-size:11px;transform:scaleX(0.89);transform-origin:50% 50%;line-height:15px"><span class="n">۹۹,۱۹۵</span></span></div>
<div class="a" style="left:523px;top:389px;width:45px;height:19px;background:#fde4a2;color:#15406a;text-align:center;padding-top:0px;box-sizing:border-box;"><span class="s" style="font-size:11px;transform:scaleX(0.89);transform-origin:50% 50%;line-height:15px"><span class="n">۹۹,۸۴۲</span></span></div>
<div class="a" style="left:426px;top:389px;width:96px;height:19px;background:#fde4a2;color:#15406a;text-align:center;padding-top:0px;box-sizing:border-box;"><span class="s" style="font-size:11px;transform:scaleX(0.89);transform-origin:50% 50%;line-height:15px"><span class="n">۵,۵۵۵,۸۲۱,۷۱۸</span></span></div>
<div class="a" style="left:344px;top:389px;width:81px;height:19px;background:#fde4a2;color:#15406a;text-align:center;padding-top:0px;box-sizing:border-box;"><span class="s" style="font-size:11px;transform:scaleX(0.89);transform-origin:50% 50%;line-height:15px"><span class="n">۵۵۴,۷<i class="z"></i>۴,۳۵۲</span></span></div>
<div class="a" style="left:300px;top:389px;width:43px;height:19px;background:#eeeeee;color:#15406a;text-align:center;padding-top:0px;box-sizing:border-box;"><span class="s" style="font-size:11px;transform:scaleX(0.89);transform-origin:50% 50%;line-height:15px"><span class="n">۷۱,۴۹۲</span></span></div>
<div class="a" style="left:254px;top:389px;width:45px;height:19px;background:#eeeeee;color:#15406a;text-align:center;padding-top:0px;box-sizing:border-box;"><span class="s" style="font-size:11px;transform:scaleX(0.89);transform-origin:50% 50%;line-height:15px"><span class="n">۷<i class="z"></i>,۵۲۶</span></span></div>
<div class="a" style="left:161px;top:389px;width:92px;height:19px;background:#fde4a2;color:#15406a;text-align:center;padding-top:0px;box-sizing:border-box;"><span class="s" style="font-size:11px;transform:scaleX(0.89);transform-origin:50% 50%;line-height:15px"><span class="n">۳,۷۱۸,۶۳۷,<i class="z"></i>۸۴</span></span></div>
<div class="a" style="left:77px;top:389px;width:83px;height:19px;background:#eeeeee;color:#15406a;text-align:center;padding-top:0px;box-sizing:border-box;"><span class="s" style="font-size:11px;transform:scaleX(0.89);transform-origin:50% 50%;line-height:15px"><span class="n">۲۶۲,۲۶<i class="z"></i>,۵۹۹</span></span></div>
<div class="a" style="left:20px;top:389px;width:56px;height:19px;background:#eeeeee;color:#15406a;text-align:right;padding:0 2px 0 0;box-sizing:border-box;"><span class="s" style="font-size:11px;transform:scaleX(0.82);transform-origin:100% 50%;line-height:15px">تولید</span></div>
<div class="a" style="left:1536px;top:409px;width:83px;height:18px;background:#d3e5f6;color:#15406a;text-align:right;padding:0 2px 0 0;box-sizing:border-box;"><span class="s" style="font-size:11px;transform:scaleX(0.82);transform-origin:100% 50%;line-height:15px">دنا</span></div>
<div class="a" style="left:1504px;top:409px;width:31px;height:18px;background:#d3e5f6;color:#15406a;text-align:right;padding:0 2px 0 0;box-sizing:border-box;"><span class="s" style="font-size:11px;transform:scaleX(0.82);transform-origin:100% 50%;line-height:15px">دستگاه</span></div>
<div class="a" style="left:1460px;top:409px;width:43px;height:18px;background:#d3e5f6;color:#15406a;text-align:center;padding-top:0px;box-sizing:border-box;"><span class="s" style="font-size:11px;transform:scaleX(0.89);transform-origin:50% 50%;line-height:15px"><span class="n">۵۲,۳۶۱</span></span></div>
<div class="a" style="left:1413px;top:409px;width:46px;height:18px;background:#d3e5f6;color:#15406a;text-align:center;padding-top:0px;box-sizing:border-box;"><span class="s" style="font-size:11px;transform:scaleX(0.89);transform-origin:50% 50%;line-height:15px"><span class="n">۵<i class="z"></i>,۳۸<i class="z"></i></span></span></div>
<div class="a" style="left:1321px;top:409px;width:91px;height:18px;background:#fde4a2;color:#15406a;text-align:center;padding-top:0px;box-sizing:border-box;"><span class="s" style="font-size:11px;transform:scaleX(0.89);transform-origin:50% 50%;line-height:15px"><span class="n">۷,۲۶۳,۴۷۹,۸۵۳</span></span></div>
<div class="a" style="left:1239px;top:409px;width:81px;height:18px;background:#d3e5f6;color:#15406a;text-align:center;padding-top:0px;box-sizing:border-box;"><span class="s" style="font-size:11px;transform:scaleX(0.89);transform-origin:50% 50%;line-height:15px"><span class="n">۳۶۵,۹۳۴,۱۱۵</span></span></div>
<div class="a" style="left:1204px;top:409px;width:34px;height:18px;background:#d3e5f6;color:#15406a;text-align:center;padding-top:0px;box-sizing:border-box;"><span class="s" style="font-size:11px;transform:scaleX(0.89);transform-origin:50% 50%;line-height:15px"><span class="n"><i class="z"></i></span></span></div>
<div class="a" style="left:1166px;top:409px;width:37px;height:18px;background:#d3e5f6;color:#15406a;text-align:center;padding-top:0px;box-sizing:border-box;"><span class="s" style="font-size:11px;transform:scaleX(0.89);transform-origin:50% 50%;line-height:15px"><span class="n"><i class="z"></i></span></span></div>
<div class="a" style="left:1106px;top:409px;width:59px;height:18px;background:#d3e5f6;color:#15406a;text-align:center;padding-top:0px;box-sizing:border-box;"><span class="s" style="font-size:11px;transform:scaleX(0.89);transform-origin:50% 50%;line-height:15px"><span class="n"><i class="z"></i></span></span></div>
<div class="a" style="left:1062px;top:409px;width:43px;height:18px;background:#fde4a2;color:#15406a;text-align:center;padding-top:0px;box-sizing:border-box;"><span class="s" style="font-size:11px;transform:scaleX(0.89);transform-origin:50% 50%;line-height:15px"><span class="n">۵۲,۳۶۱</span></span></div>
<div class="a" style="left:1017px;top:409px;width:44px;height:18px;background:#fde4a2;color:#15406a;text-align:center;padding-top:0px;box-sizing:border-box;"><span class="s" style="font-size:11px;transform:scaleX(0.89);transform-origin:50% 50%;line-height:15px"><span class="n">۵<i class="z"></i>,۳۸<i class="z"></i></span></span></div>
<div class="a" style="left:945px;top:409px;width:71px;height:18px;background:#fde4a2;color:#15406a;text-align:center;padding-top:0px;box-sizing:border-box;"><span class="s" style="font-size:11px;transform:scaleX(0.89);transform-origin:50% 50%;line-height:15px"><span class="n">۷,۲۶۳,۴۷۹,۸۵۳</span></span></div>
<div class="a" style="left:864px;top:409px;width:80px;height:18px;background:#fde4a2;color:#15406a;text-align:center;padding-top:0px;box-sizing:border-box;"><span class="s" style="font-size:11px;transform:scaleX(0.89);transform-origin:50% 50%;line-height:15px"><span class="n">۳۶۵,۹۳۴,۱۱۵</span></span></div>
<div class="a" style="left:822px;top:409px;width:41px;height:18px;background:#d3e5f6;color:#15406a;text-align:center;padding-top:0px;box-sizing:border-box;"><span class="s" style="font-size:11px;transform:scaleX(0.89);transform-origin:50% 50%;line-height:15px"><span class="n">۹,۶۱<i class="z"></i></span></span></div>
<div class="a" style="left:782px;top:409px;width:39px;height:18px;background:#d3e5f6;color:#15406a;text-align:center;padding-top:0px;box-sizing:border-box;"><span class="s" style="font-size:11px;transform:scaleX(0.89);transform-origin:50% 50%;line-height:15px"><span class="n">۱<i class="z"></i>,۹۴۸</span></span></div>
<div class="a" style="left:690px;top:409px;width:91px;height:18px;background:#fde4a2;color:#15406a;text-align:center;padding-top:0px;box-sizing:border-box;"><span class="s" style="font-size:11px;transform:scaleX(0.89);transform-origin:50% 50%;line-height:15px"><span class="n">۸,۷۱۹,۴<i class="z"></i>۹,۹۳۸</span></span></div>
<div class="a" style="left:613px;top:409px;width:76px;height:18px;background:#d3e5f6;color:#15406a;text-align:center;padding-top:0px;box-sizing:border-box;"><span class="s" style="font-size:11px;transform:scaleX(0.89);transform-origin:50% 50%;line-height:15px"><span class="n">۹۵,۴۶<i class="z"></i>,۱<i class="z"></i><i class="z"></i></span></span></div>
<div class="a" style="left:569px;top:409px;width:43px;height:18px;background:#fde4a2;color:#15406a;text-align:center;padding-top:0px;box-sizing:border-box;"><span class="s" style="font-size:11px;transform:scaleX(0.89);transform-origin:50% 50%;line-height:15px"><span class="n">۶۱,۹۷۱</span></span></div>
<div class="a" style="left:523px;top:409px;width:45px;height:18px;background:#fde4a2;color:#15406a;text-align:center;padding-top:0px;box-sizing:border-box;"><span class="s" style="font-size:11px;transform:scaleX(0.89);transform-origin:50% 50%;line-height:15px"><span class="n">۶۱,۳۲۸</span></span></div>
<div class="a" style="left:426px;top:409px;width:96px;height:18px;background:#fde4a2;color:#15406a;text-align:center;padding-top:0px;box-sizing:border-box;"><span class="s" style="font-size:11px;transform:scaleX(0.89);transform-origin:50% 50%;line-height:15px"><span class="n">۷,۵۲۳,۳۸۵,۹۷۴</span></span></div>
<div class="a" style="left:344px;top:409px;width:81px;height:18px;background:#fde4a2;color:#15406a;text-align:center;padding-top:0px;box-sizing:border-box;"><span class="s" style="font-size:11px;transform:scaleX(0.89);transform-origin:50% 50%;line-height:15px"><span class="n">۴۶۱,۳۹۴,۲۱۵</span></span></div>
<div class="a" style="left:300px;top:409px;width:43px;height:18px;background:#d3e5f6;color:#15406a;text-align:center;padding-top:0px;box-sizing:border-box;"><span class="s" style="font-size:11px;transform:scaleX(0.89);transform-origin:50% 50%;line-height:15px"><span class="n">۵۷,۹۹۵</span></span></div>
<div class="a" style="left:254px;top:409px;width:45px;height:18px;background:#d3e5f6;color:#15406a;text-align:center;padding-top:0px;box-sizing:border-box;"><span class="s" style="font-size:11px;transform:scaleX(0.89);transform-origin:50% 50%;line-height:15px"><span class="n">۵۷,۳۴۱</span></span></div>
<div class="a" style="left:161px;top:409px;width:92px;height:18px;background:#fde4a2;color:#15406a;text-align:center;padding-top:0px;box-sizing:border-box;"><span class="s" style="font-size:11px;transform:scaleX(0.89);transform-origin:50% 50%;line-height:15px"><span class="n">۵,۲۹۸,۸۵۱,۶<i class="z"></i>۷</span></span></div>
<div class="a" style="left:77px;top:409px;width:83px;height:18px;background:#d3e5f6;color:#15406a;text-align:center;padding-top:0px;box-sizing:border-box;"><span class="s" style="font-size:11px;transform:scaleX(0.89);transform-origin:50% 50%;line-height:15px"><span class="n">۳<i class="z"></i>۳,۸۴۱,۴۵<i class="z"></i></span></span></div>
<div class="a" style="left:20px;top:409px;width:56px;height:18px;background:#d3e5f6;color:#15406a;text-align:right;padding:0 2px 0 0;box-sizing:border-box;"><span class="s" style="font-size:11px;transform:scaleX(0.82);transform-origin:100% 50%;line-height:15px">تولید</span></div>
<div class="a" style="left:1536px;top:428px;width:83px;height:19px;background:#eeeeee;color:#15406a;text-align:right;padding:0 2px 0 0;box-sizing:border-box;"><span class="s" style="font-size:11px;transform:scaleX(0.82);transform-origin:100% 50%;line-height:15px">رانا</span></div>
<div class="a" style="left:1504px;top:428px;width:31px;height:19px;background:#eeeeee;color:#15406a;text-align:right;padding:0 2px 0 0;box-sizing:border-box;"><span class="s" style="font-size:11px;transform:scaleX(0.82);transform-origin:100% 50%;line-height:15px">دستگاه</span></div>
<div class="a" style="left:1460px;top:428px;width:43px;height:19px;background:#eeeeee;color:#15406a;text-align:center;padding-top:0px;box-sizing:border-box;"><span class="s" style="font-size:11px;transform:scaleX(0.89);transform-origin:50% 50%;line-height:15px"><span class="n">۷,۲۸۳</span></span></div>
<div class="a" style="left:1413px;top:428px;width:46px;height:19px;background:#eeeeee;color:#15406a;text-align:center;padding-top:0px;box-sizing:border-box;"><span class="s" style="font-size:11px;transform:scaleX(0.89);transform-origin:50% 50%;line-height:15px"><span class="n">۷,۳۱۴</span></span></div>
<div class="a" style="left:1321px;top:428px;width:91px;height:19px;background:#fde4a2;color:#15406a;text-align:center;padding-top:0px;box-sizing:border-box;"><span class="s" style="font-size:11px;transform:scaleX(0.89);transform-origin:50% 50%;line-height:15px"><span class="n">۵,۳<i class="z"></i>۲,<i class="z"></i>۸۳,۸۱۲</span></span></div>
<div class="a" style="left:1239px;top:428px;width:81px;height:19px;background:#eeeeee;color:#15406a;text-align:center;padding-top:0px;box-sizing:border-box;"><span class="s" style="font-size:11px;transform:scaleX(0.89);transform-origin:50% 50%;line-height:15px"><span class="n">۳۸,۷۷۹,۴۴۱</span></span></div>
<div class="a" style="left:1204px;top:428px;width:34px;height:19px;background:#eeeeee;color:#15406a;text-align:center;padding-top:0px;box-sizing:border-box;"><span class="s" style="font-size:11px;transform:scaleX(0.89);transform-origin:50% 50%;line-height:15px"><span class="n"><i class="z"></i></span></span></div>
<div class="a" style="left:1166px;top:428px;width:37px;height:19px;background:#eeeeee;color:#15406a;text-align:center;padding-top:0px;box-sizing:border-box;"><span class="s" style="font-size:11px;transform:scaleX(0.89);transform-origin:50% 50%;line-height:15px"><span class="n"><i class="z"></i></span></span></div>
<div class="a" style="left:1106px;top:428px;width:59px;height:19px;background:#eeeeee;color:#15406a;text-align:center;padding-top:0px;box-sizing:border-box;"><span class="s" style="font-size:11px;transform:scaleX(0.89);transform-origin:50% 50%;line-height:15px"><span class="n"><i class="z"></i></span></span></div>
<div class="a" style="left:1062px;top:428px;width:43px;height:19px;background:#fde4a2;color:#15406a;text-align:center;padding-top:0px;box-sizing:border-box;"><span class="s" style="font-size:11px;transform:scaleX(0.89);transform-origin:50% 50%;line-height:15px"><span class="n">۷,۲۸۳</span></span></div>
<div class="a" style="left:1017px;top:428px;width:44px;height:19px;background:#fde4a2;color:#15406a;text-align:center;padding-top:0px;box-sizing:border-box;"><span class="s" style="font-size:11px;transform:scaleX(0.89);transform-origin:50% 50%;line-height:15px"><span class="n">۷,۳۱۴</span></span></div>
<div class="a" style="left:945px;top:428px;width:71px;height:19px;background:#fde4a2;color:#15406a;text-align:center;padding-top:0px;box-sizing:border-box;"><span class="s" style="font-size:11px;transform:scaleX(0.89);transform-origin:50% 50%;line-height:15px"><span class="n">۵,۳<i class="z"></i>۲,<i class="z"></i>۸۳,۸۱۲</span></span></div>
<div class="a" style="left:864px;top:428px;width:80px;height:19px;background:#fde4a2;color:#15406a;text-align:center;padding-top:0px;box-sizing:border-box;"><span class="s" style="font-size:11px;transform:scaleX(0.89);transform-origin:50% 50%;line-height:15px"><span class="n">۳۸,۷۷۹,۴۴۱</span></span></div>
<div class="a" style="left:822px;top:428px;width:41px;height:19px;background:#eeeeee;color:#15406a;text-align:center;padding-top:0px;box-sizing:border-box;"><span class="s" style="font-size:11px;transform:scaleX(0.89);transform-origin:50% 50%;line-height:15px"><span class="n">۴,۵<i class="z"></i>۱</span></span></div>
<div class="a" style="left:782px;top:428px;width:39px;height:19px;background:#eeeeee;color:#15406a;text-align:center;padding-top:0px;box-sizing:border-box;"><span class="s" style="font-size:11px;transform:scaleX(0.89);transform-origin:50% 50%;line-height:15px"><span class="n">۴,۴۸۷</span></span></div>
<div class="a" style="left:690px;top:428px;width:91px;height:19px;background:#fde4a2;color:#15406a;text-align:center;padding-top:0px;box-sizing:border-box;"><span class="s" style="font-size:11px;transform:scaleX(0.89);transform-origin:50% 50%;line-height:15px"><span class="n">۶,۴۱۸,۲۸۹,۷۲۶</span></span></div>
<div class="a" style="left:613px;top:428px;width:76px;height:19px;background:#eeeeee;color:#15406a;text-align:center;padding-top:0px;box-sizing:border-box;"><span class="s" style="font-size:11px;transform:scaleX(0.89);transform-origin:50% 50%;line-height:15px"><span class="n">۲۸,۷۹۸,۸۶۶</span></span></div>
<div class="a" style="left:569px;top:428px;width:43px;height:19px;background:#fde4a2;color:#15406a;text-align:center;padding-top:0px;box-sizing:border-box;"><span class="s" style="font-size:11px;transform:scaleX(0.89);transform-origin:50% 50%;line-height:15px"><span class="n">۱۱,۷۸۴</span></span></div>
<div class="a" style="left:523px;top:428px;width:45px;height:19px;background:#fde4a2;color:#15406a;text-align:center;padding-top:0px;box-sizing:border-box;"><span class="s" style="font-size:11px;transform:scaleX(0.89);transform-origin:50% 50%;line-height:15px"><span class="n">۱۱,۸<i class="z"></i>۱</span></span></div>
<div class="a" style="left:426px;top:428px;width:96px;height:19px;background:#fde4a2;color:#15406a;text-align:center;padding-top:0px;box-sizing:border-box;"><span class="s" style="font-size:11px;transform:scaleX(0.89);transform-origin:50% 50%;line-height:15px"><span class="n">۵,۷۲۶,۴۸۹,۸۷۴</span></span></div>
<div class="a" style="left:344px;top:428px;width:81px;height:19px;background:#fde4a2;color:#15406a;text-align:center;padding-top:0px;box-sizing:border-box;"><span class="s" style="font-size:11px;transform:scaleX(0.89);transform-origin:50% 50%;line-height:15px"><span class="n">۶۷,۵۷۸,۳<i class="z"></i>۷</span></span></div>
<div class="a" style="left:300px;top:428px;width:43px;height:19px;background:#eeeeee;color:#15406a;text-align:center;padding-top:0px;box-sizing:border-box;"><span class="s" style="font-size:11px;transform:scaleX(0.89);transform-origin:50% 50%;line-height:15px"><span class="n">۱۱,۲۲۲</span></span></div>
<div class="a" style="left:254px;top:428px;width:45px;height:19px;background:#eeeeee;color:#15406a;text-align:center;padding-top:0px;box-sizing:border-box;"><span class="s" style="font-size:11px;transform:scaleX(0.89);transform-origin:50% 50%;line-height:15px"><span class="n">۹,۵۷۶</span></span></div>
<div class="a" style="left:161px;top:428px;width:92px;height:19px;background:#fde4a2;color:#15406a;text-align:center;padding-top:0px;box-sizing:border-box;"><span class="s" style="font-size:11px;transform:scaleX(0.89);transform-origin:50% 50%;line-height:15px"><span class="n">۳,<i class="z"></i>۹۵,۴۵۵,۶۱۸</span></span></div>
<div class="a" style="left:77px;top:428px;width:83px;height:19px;background:#eeeeee;color:#15406a;text-align:center;padding-top:0px;box-sizing:border-box;"><span class="s" style="font-size:11px;transform:scaleX(0.89);transform-origin:50% 50%;line-height:15px"><span class="n">۲۹,۶۴۲,<i class="z"></i>۸۳</span></span></div>
<div class="a" style="left:20px;top:428px;width:56px;height:19px;background:#eeeeee;color:#15406a;text-align:right;padding:0 2px 0 0;box-sizing:border-box;"><span class="s" style="font-size:11px;transform:scaleX(0.82);transform-origin:100% 50%;line-height:15px">تولید</span></div>
<div class="a" style="left:1536px;top:448px;width:83px;height:18px;background:#d3e5f6;color:#15406a;text-align:right;padding:0 2px 0 0;box-sizing:border-box;"><span class="s" style="font-size:11px;transform:scaleX(0.82);transform-origin:100% 50%;line-height:15px">سایر محصولات</span></div>
<div class="a" style="left:1504px;top:448px;width:31px;height:18px;background:#d3e5f6;color:#15406a;text-align:right;padding:0 2px 0 0;box-sizing:border-box;"><span class="s" style="font-size:11px;transform:scaleX(0.82);transform-origin:100% 50%;line-height:15px">دستگاه</span></div>
<div class="a" style="left:1460px;top:448px;width:43px;height:18px;background:#d3e5f6;color:#15406a;text-align:center;padding-top:0px;box-sizing:border-box;"><span class="s" style="font-size:11px;transform:scaleX(0.89);transform-origin:50% 50%;line-height:15px"><span class="n">۱۴,۴۶۴</span></span></div>
<div class="a" style="left:1413px;top:448px;width:46px;height:18px;background:#d3e5f6;color:#15406a;text-align:center;padding-top:0px;box-sizing:border-box;"><span class="s" style="font-size:11px;transform:scaleX(0.89);transform-origin:50% 50%;line-height:15px"><span class="n">۱۵,۲۱۳</span></span></div>
<div class="a" style="left:1321px;top:448px;width:91px;height:18px;background:#fde4a2;color:#15406a;text-align:center;padding-top:0px;box-sizing:border-box;"><span class="s" style="font-size:11px;transform:scaleX(0.89);transform-origin:50% 50%;line-height:15px"><span class="n">۶,۳۴۷,۷۱<i class="z"></i>,۲۴۸</span></span></div>
<div class="a" style="left:1239px;top:448px;width:81px;height:18px;background:#d3e5f6;color:#15406a;text-align:center;padding-top:0px;box-sizing:border-box;"><span class="s" style="font-size:11px;transform:scaleX(0.89);transform-origin:50% 50%;line-height:15px"><span class="n">۹۶,۵۶۷,۷۱۶</span></span></div>
<div class="a" style="left:1204px;top:448px;width:34px;height:18px;background:#d3e5f6;color:#15406a;text-align:center;padding-top:0px;box-sizing:border-box;"><span class="s" style="font-size:11px;transform:scaleX(0.89);transform-origin:50% 50%;line-height:15px"><span class="n"><i class="z"></i></span></span></div>
<div class="a" style="left:1166px;top:448px;width:37px;height:18px;background:#d3e5f6;color:#15406a;text-align:center;padding-top:0px;box-sizing:border-box;"><span class="s" style="font-size:11px;transform:scaleX(0.89);transform-origin:50% 50%;line-height:15px"><span class="n"><i class="z"></i></span></span></div>
<div class="a" style="left:1106px;top:448px;width:59px;height:18px;background:#d3e5f6;color:#15406a;text-align:center;padding-top:0px;box-sizing:border-box;"><span class="s" style="font-size:11px;transform:scaleX(0.89);transform-origin:50% 50%;line-height:15px"><span class="n"><i class="z"></i></span></span></div>
<div class="a" style="left:1062px;top:448px;width:43px;height:18px;background:#fde4a2;color:#15406a;text-align:center;padding-top:0px;box-sizing:border-box;"><span class="s" style="font-size:11px;transform:scaleX(0.89);transform-origin:50% 50%;line-height:15px"><span class="n">۱۴,۴۶۴</span></span></div>
<div class="a" style="left:1017px;top:448px;width:44px;height:18px;background:#fde4a2;color:#15406a;text-align:center;padding-top:0px;box-sizing:border-box;"><span class="s" style="font-size:11px;transform:scaleX(0.89);transform-origin:50% 50%;line-height:15px"><span class="n">۱۵,۲۱۳</span></span></div>
<div class="a" style="left:945px;top:448px;width:71px;height:18px;background:#fde4a2;color:#15406a;text-align:center;padding-top:0px;box-sizing:border-box;"><span class="s" style="font-size:11px;transform:scaleX(0.89);transform-origin:50% 50%;line-height:15px"><span class="n">۶,۳۴۷,۷۱<i class="z"></i>,۲۴۸</span></span></div>
<div class="a" style="left:864px;top:448px;width:80px;height:18px;background:#fde4a2;color:#15406a;text-align:center;padding-top:0px;box-sizing:border-box;"><span class="s" style="font-size:11px;transform:scaleX(0.89);transform-origin:50% 50%;line-height:15px"><span class="n">۹۶,۵۶۷,۷۱۶</span></span></div>
<div class="a" style="left:822px;top:448px;width:41px;height:18px;background:#d3e5f6;color:#15406a;text-align:center;padding-top:0px;box-sizing:border-box;"><span class="s" style="font-size:11px;transform:scaleX(0.89);transform-origin:50% 50%;line-height:15px"><span class="n">۳,۲۶۷</span></span></div>
<div class="a" style="left:782px;top:448px;width:39px;height:18px;background:#d3e5f6;color:#15406a;text-align:center;padding-top:0px;box-sizing:border-box;"><span class="s" style="font-size:11px;transform:scaleX(0.89);transform-origin:50% 50%;line-height:15px"><span class="n">۴,<i class="z"></i>۵۳</span></span></div>
<div class="a" style="left:690px;top:448px;width:91px;height:18px;background:#fde4a2;color:#15406a;text-align:center;padding-top:0px;box-sizing:border-box;"><span class="s" style="font-size:11px;transform:scaleX(0.89);transform-origin:50% 50%;line-height:15px"><span class="n">۷,۷۸۸,۷۱۳,۲۹۹</span></span></div>
<div class="a" style="left:613px;top:448px;width:76px;height:18px;background:#d3e5f6;color:#15406a;text-align:center;padding-top:0px;box-sizing:border-box;"><span class="s" style="font-size:11px;transform:scaleX(0.89);transform-origin:50% 50%;line-height:15px"><span class="n">۳۱,۵۶۷,۶۵۵</span></span></div>
<div class="a" style="left:569px;top:448px;width:43px;height:18px;background:#fde4a2;color:#15406a;text-align:center;padding-top:0px;box-sizing:border-box;"><span class="s" style="font-size:11px;transform:scaleX(0.89);transform-origin:50% 50%;line-height:15px"><span class="n">۱۷,۷۳۱</span></span></div>
<div class="a" style="left:523px;top:448px;width:45px;height:18px;background:#fde4a2;color:#15406a;text-align:center;padding-top:0px;box-sizing:border-box;"><span class="s" style="font-size:11px;transform:scaleX(0.89);transform-origin:50% 50%;line-height:15px"><span class="n">۱۹,۲۶۶</span></span></div>
<div class="a" style="left:426px;top:448px;width:96px;height:18px;background:#fde4a2;color:#15406a;text-align:center;padding-top:0px;box-sizing:border-box;"><span class="s" style="font-size:11px;transform:scaleX(0.89);transform-origin:50% 50%;line-height:15px"><span class="n">۶,۶۵<i class="z"></i>,۸۵۴,۹۲۶</span></span></div>
<div class="a" style="left:344px;top:448px;width:81px;height:18px;background:#fde4a2;color:#15406a;text-align:center;padding-top:0px;box-sizing:border-box;"><span class="s" style="font-size:11px;transform:scaleX(0.89);transform-origin:50% 50%;line-height:15px"><span class="n">۱۲۸,۱۳۵,۳۷۱</span></span></div>
<div class="a" style="left:300px;top:448px;width:43px;height:18px;background:#d3e5f6;color:#15406a;text-align:center;padding-top:0px;box-sizing:border-box;"><span class="s" style="font-size:11px;transform:scaleX(0.89);transform-origin:50% 50%;line-height:15px"><span class="n">۱۹,۱۳۸</span></span></div>
<div class="a" style="left:254px;top:448px;width:45px;height:18px;background:#d3e5f6;color:#15406a;text-align:center;padding-top:0px;box-sizing:border-box;"><span class="s" style="font-size:11px;transform:scaleX(0.89);transform-origin:50% 50%;line-height:15px"><span class="n">۲۲,۱۲۸</span></span></div>
<div class="a" style="left:161px;top:448px;width:92px;height:18px;background:#fde4a2;color:#15406a;text-align:center;padding-top:0px;box-sizing:border-box;"><span class="s" style="font-size:11px;transform:scaleX(0.89);transform-origin:50% 50%;line-height:15px"><span class="n">۳,۷۱<i class="z"></i>,۱۷۹,۵۹۱</span></span></div>
<div class="a" style="left:77px;top:448px;width:83px;height:18px;background:#d3e5f6;color:#15406a;text-align:center;padding-top:0px;box-sizing:border-box;"><span class="s" style="font-size:11px;transform:scaleX(0.89);transform-origin:50% 50%;line-height:15px"><span class="n">۸۲,<i class="z"></i>۹۸,۸۵۴</span></span></div>
<div class="a" style="left:20px;top:448px;width:56px;height:18px;background:#d3e5f6;color:#15406a;text-align:right;padding:0 2px 0 0;box-sizing:border-box;"><span class="s" style="font-size:11px;transform:scaleX(0.82);transform-origin:100% 50%;line-height:15px">تولید</span></div>
<div class="a" style="left:1536px;top:467px;width:83px;height:19px;background:#eeeeee;color:#15406a;text-align:right;padding:0 2px 0 0;box-sizing:border-box;"><span class="s" style="font-size:11px;transform:scaleX(0.82);transform-origin:100% 50%;line-height:15px">هایما</span></div>
<div class="a" style="left:1504px;top:467px;width:31px;height:19px;background:#eeeeee;color:#15406a;text-align:right;padding:0 2px 0 0;box-sizing:border-box;"><span class="s" style="font-size:11px;transform:scaleX(0.82);transform-origin:100% 50%;line-height:15px">دستگاه</span></div>
<div class="a" style="left:1460px;top:467px;width:43px;height:19px;background:#eeeeee;color:#15406a;text-align:center;padding-top:0px;box-sizing:border-box;"><span class="s" style="font-size:11px;transform:scaleX(0.89);transform-origin:50% 50%;line-height:15px"><span class="n">۱۲,۸۹۱</span></span></div>
<div class="a" style="left:1413px;top:467px;width:46px;height:19px;background:#eeeeee;color:#15406a;text-align:center;padding-top:0px;box-sizing:border-box;"><span class="s" style="font-size:11px;transform:scaleX(0.89);transform-origin:50% 50%;line-height:15px"><span class="n">۱۱,۲۶۹</span></span></div>
<div class="a" style="left:1321px;top:467px;width:91px;height:19px;background:#fde4a2;color:#15406a;text-align:center;padding-top:0px;box-sizing:border-box;"><span class="s" style="font-size:11px;transform:scaleX(0.89);transform-origin:50% 50%;line-height:15px"><span class="n">۱۲,۹۸۲,<i class="z"></i>۵۵,۱<i class="z"></i>۷</span></span></div>
<div class="a" style="left:1239px;top:467px;width:81px;height:19px;background:#eeeeee;color:#15406a;text-align:center;padding-top:0px;box-sizing:border-box;"><span class="s" style="font-size:11px;transform:scaleX(0.89);transform-origin:50% 50%;line-height:15px"><span class="n">۱۴۶,۲۹۴,۷۷۹</span></span></div>
<div class="a" style="left:1204px;top:467px;width:34px;height:19px;background:#eeeeee;color:#15406a;text-align:center;padding-top:0px;box-sizing:border-box;"><span class="s" style="font-size:11px;transform:scaleX(0.89);transform-origin:50% 50%;line-height:15px"><span class="n"><i class="z"></i></span></span></div>
<div class="a" style="left:1166px;top:467px;width:37px;height:19px;background:#eeeeee;color:#15406a;text-align:center;padding-top:0px;box-sizing:border-box;"><span class="s" style="font-size:11px;transform:scaleX(0.89);transform-origin:50% 50%;line-height:15px"><span class="n"><i class="z"></i></span></span></div>
<div class="a" style="left:1106px;top:467px;width:59px;height:19px;background:#eeeeee;color:#15406a;text-align:center;padding-top:0px;box-sizing:border-box;"><span class="s" style="font-size:11px;transform:scaleX(0.89);transform-origin:50% 50%;line-height:15px"><span class="n"><i class="z"></i></span></span></div>
<div class="a" style="left:1062px;top:467px;width:43px;height:19px;background:#fde4a2;color:#15406a;text-align:center;padding-top:0px;box-sizing:border-box;"><span class="s" style="font-size:11px;transform:scaleX(0.89);transform-origin:50% 50%;line-height:15px"><span class="n">۱۲,۸۹۱</span></span></div>
<div class="a" style="left:1017px;top:467px;width:44px;height:19px;background:#fde4a2;color:#15406a;text-align:center;padding-top:0px;box-sizing:border-box;"><span class="s" style="font-size:11px;transform:scaleX(0.89);transform-origin:50% 50%;line-height:15px"><span class="n">۱۱,۲۶۹</span></span></div>
<div class="a" style="left:945px;top:467px;width:71px;height:19px;background:#fde4a2;color:#15406a;text-align:center;padding-top:0px;box-sizing:border-box;"><span class="s" style="font-size:11px;transform:scaleX(0.89);transform-origin:50% 50%;line-height:15px"><span class="n">۱۲,۹۸۲,<i class="z"></i>۵۵,۱<i class="z"></i>۷</span></span></div>
<div class="a" style="left:864px;top:467px;width:80px;height:19px;background:#fde4a2;color:#15406a;text-align:center;padding-top:0px;box-sizing:border-box;"><span class="s" style="font-size:11px;transform:scaleX(0.89);transform-origin:50% 50%;line-height:15px"><span class="n">۱۴۶,۲۹۴,۷۷۹</span></span></div>
<div class="a" style="left:822px;top:467px;width:41px;height:19px;background:#eeeeee;color:#15406a;text-align:center;padding-top:0px;box-sizing:border-box;"><span class="s" style="font-size:11px;transform:scaleX(0.89);transform-origin:50% 50%;line-height:15px"><span class="n">۲,۱۴۹</span></span></div>
<div class="a" style="left:782px;top:467px;width:39px;height:19px;background:#eeeeee;color:#15406a;text-align:center;padding-top:0px;box-sizing:border-box;"><span class="s" style="font-size:11px;transform:scaleX(0.89);transform-origin:50% 50%;line-height:15px"><span class="n">۷۱۶</span></span></div>
<div class="a" style="left:690px;top:467px;width:91px;height:19px;background:#fde4a2;color:#15406a;text-align:center;padding-top:0px;box-sizing:border-box;"><span class="s" style="font-size:11px;transform:scaleX(0.89);transform-origin:50% 50%;line-height:15px"><span class="n">۱۴,۸۴۲,۶۵۹,۲۱۸</span></span></div>
<div class="a" style="left:613px;top:467px;width:76px;height:19px;background:#eeeeee;color:#15406a;text-align:center;padding-top:0px;box-sizing:border-box;"><span class="s" style="font-size:11px;transform:scaleX(0.89);transform-origin:50% 50%;line-height:15px"><span class="n">۱<i class="z"></i>,۶۲۷,۳۴۴</span></span></div>
<div class="a" style="left:569px;top:467px;width:43px;height:19px;background:#fde4a2;color:#15406a;text-align:center;padding-top:0px;box-sizing:border-box;"><span class="s" style="font-size:11px;transform:scaleX(0.89);transform-origin:50% 50%;line-height:15px"><span class="n">۱۵,<i class="z"></i>۴<i class="z"></i></span></span></div>
<div class="a" style="left:523px;top:467px;width:45px;height:19px;background:#fde4a2;color:#15406a;text-align:center;padding-top:0px;box-sizing:border-box;"><span class="s" style="font-size:11px;transform:scaleX(0.89);transform-origin:50% 50%;line-height:15px"><span class="n">۱۱,۹۸۵</span></span></div>
<div class="a" style="left:426px;top:467px;width:96px;height:19px;background:#fde4a2;color:#15406a;text-align:center;padding-top:0px;box-sizing:border-box;"><span class="s" style="font-size:11px;transform:scaleX(0.89);transform-origin:50% 50%;line-height:15px"><span class="n">۱۳,<i class="z"></i>۹۳,۲۱<i class="z"></i>,<i class="z"></i>۹۶</span></span></div>
<div class="a" style="left:344px;top:467px;width:81px;height:19px;background:#fde4a2;color:#15406a;text-align:center;padding-top:0px;box-sizing:border-box;"><span class="s" style="font-size:11px;transform:scaleX(0.89);transform-origin:50% 50%;line-height:15px"><span class="n">۱۵۶,۹۲۲,۱۲۳</span></span></div>
<div class="a" style="left:300px;top:467px;width:43px;height:19px;background:#eeeeee;color:#15406a;text-align:center;padding-top:0px;box-sizing:border-box;"><span class="s" style="font-size:11px;transform:scaleX(0.89);transform-origin:50% 50%;line-height:15px"><span class="n">۹,۶۸۹</span></span></div>
<div class="a" style="left:254px;top:467px;width:45px;height:19px;background:#eeeeee;color:#15406a;text-align:center;padding-top:0px;box-sizing:border-box;"><span class="s" style="font-size:11px;transform:scaleX(0.89);transform-origin:50% 50%;line-height:15px"><span class="n">۸,۸۷۷</span></span></div>
<div class="a" style="left:161px;top:467px;width:92px;height:19px;background:#fde4a2;color:#15406a;text-align:center;padding-top:0px;box-sizing:border-box;"><span class="s" style="font-size:11px;transform:scaleX(0.89);transform-origin:50% 50%;line-height:15px"><span class="n">۹,۷۶۳,۷۲۱,۵۲۸</span></span></div>
<div class="a" style="left:77px;top:467px;width:83px;height:19px;background:#eeeeee;color:#15406a;text-align:center;padding-top:0px;box-sizing:border-box;"><span class="s" style="font-size:11px;transform:scaleX(0.89);transform-origin:50% 50%;line-height:15px"><span class="n">۸۶,۶۷۲,۵۵۶</span></span></div>
<div class="a" style="left:20px;top:467px;width:56px;height:19px;background:#eeeeee;color:#15406a;text-align:right;padding:0 2px 0 0;box-sizing:border-box;"><span class="s" style="font-size:11px;transform:scaleX(0.82);transform-origin:100% 50%;line-height:15px">تولید</span></div>
<div class="a" style="left:1536px;top:487px;width:83px;height:18px;background:#d3e5f6;color:#15406a;text-align:right;padding:0 2px 0 0;box-sizing:border-box;"><span class="s" style="font-size:11px;transform:scaleX(0.82);transform-origin:100% 50%;line-height:15px">تارا</span></div>
<div class="a" style="left:1504px;top:487px;width:31px;height:18px;background:#d3e5f6;color:#15406a;text-align:right;padding:0 2px 0 0;box-sizing:border-box;"><span class="s" style="font-size:11px;transform:scaleX(0.82);transform-origin:100% 50%;line-height:15px">دستگاه</span></div>
<div class="a" style="left:1460px;top:487px;width:43px;height:18px;background:#d3e5f6;color:#15406a;text-align:center;padding-top:0px;box-sizing:border-box;"><span class="s" style="font-size:11px;transform:scaleX(0.89);transform-origin:50% 50%;line-height:15px"><span class="n">۴۹,۴۸۹</span></span></div>
<div class="a" style="left:1413px;top:487px;width:46px;height:18px;background:#d3e5f6;color:#15406a;text-align:center;padding-top:0px;box-sizing:border-box;"><span class="s" style="font-size:11px;transform:scaleX(0.89);transform-origin:50% 50%;line-height:15px"><span class="n">۴۸,۵۷۴</span></span></div>
<div class="a" style="left:1321px;top:487px;width:91px;height:18px;background:#fde4a2;color:#15406a;text-align:center;padding-top:0px;box-sizing:border-box;"><span class="s" style="font-size:11px;transform:scaleX(0.89);transform-origin:50% 50%;line-height:15px"><span class="n">۷,۳۲۱,۳۹۶,۵۷<i class="z"></i></span></span></div>
<div class="a" style="left:1239px;top:487px;width:81px;height:18px;background:#d3e5f6;color:#15406a;text-align:center;padding-top:0px;box-sizing:border-box;"><span class="s" style="font-size:11px;transform:scaleX(0.89);transform-origin:50% 50%;line-height:15px"><span class="n">۳۵۵,۶۲۹,۵۱۷</span></span></div>
<div class="a" style="left:1204px;top:487px;width:34px;height:18px;background:#d3e5f6;color:#15406a;text-align:center;padding-top:0px;box-sizing:border-box;"><span class="s" style="font-size:11px;transform:scaleX(0.89);transform-origin:50% 50%;line-height:15px"><span class="n"><i class="z"></i></span></span></div>
<div class="a" style="left:1166px;top:487px;width:37px;height:18px;background:#d3e5f6;color:#15406a;text-align:center;padding-top:0px;box-sizing:border-box;"><span class="s" style="font-size:11px;transform:scaleX(0.89);transform-origin:50% 50%;line-height:15px"><span class="n"><i class="z"></i></span></span></div>
<div class="a" style="left:1106px;top:487px;width:59px;height:18px;background:#d3e5f6;color:#15406a;text-align:center;padding-top:0px;box-sizing:border-box;"><span class="s" style="font-size:11px;transform:scaleX(0.89);transform-origin:50% 50%;line-height:15px"><span class="n"><i class="z"></i></span></span></div>
<div class="a" style="left:1062px;top:487px;width:43px;height:18px;background:#fde4a2;color:#15406a;text-align:center;padding-top:0px;box-sizing:border-box;"><span class="s" style="font-size:11px;transform:scaleX(0.89);transform-origin:50% 50%;line-height:15px"><span class="n">۴۹,۴۸۹</span></span></div>
<div class="a" style="left:1017px;top:487px;width:44px;height:18px;background:#fde4a2;color:#15406a;text-align:center;padding-top:0px;box-sizing:border-box;"><span class="s" style="font-size:11px;transform:scaleX(0.89);transform-origin:50% 50%;line-height:15px"><span class="n">۴۸,۵۷۴</span></span></div>
<div class="a" style="left:945px;top:487px;width:71px;height:18px;background:#fde4a2;color:#15406a;text-align:center;padding-top:0px;box-sizing:border-box;"><span class="s" style="font-size:11px;transform:scaleX(0.89);transform-origin:50% 50%;line-height:15px"><span class="n">۷,۳۲۱,۳۹۶,۵۷<i class="z"></i></span></span></div>
<div class="a" style="left:864px;top:487px;width:80px;height:18px;background:#fde4a2;color:#15406a;text-align:center;padding-top:0px;box-sizing:border-box;"><span class="s" style="font-size:11px;transform:scaleX(0.89);transform-origin:50% 50%;line-height:15px"><span class="n">۳۵۵,۶۲۹,۵۱۷</span></span></div>
<div class="a" style="left:822px;top:487px;width:41px;height:18px;background:#d3e5f6;color:#15406a;text-align:center;padding-top:0px;box-sizing:border-box;"><span class="s" style="font-size:11px;transform:scaleX(0.89);transform-origin:50% 50%;line-height:15px"><span class="n">۹,۲۸۵</span></span></div>
<div class="a" style="left:782px;top:487px;width:39px;height:18px;background:#d3e5f6;color:#15406a;text-align:center;padding-top:0px;box-sizing:border-box;"><span class="s" style="font-size:11px;transform:scaleX(0.89);transform-origin:50% 50%;line-height:15px"><span class="n">۹,۵۹<i class="z"></i></span></span></div>
<div class="a" style="left:690px;top:487px;width:91px;height:18px;background:#fde4a2;color:#15406a;text-align:center;padding-top:0px;box-sizing:border-box;"><span class="s" style="font-size:11px;transform:scaleX(0.89);transform-origin:50% 50%;line-height:15px"><span class="n">۸,<i class="z"></i>۲۶,۷۴۷,۶۵۴</span></span></div>
<div class="a" style="left:613px;top:487px;width:76px;height:18px;background:#d3e5f6;color:#15406a;text-align:center;padding-top:0px;box-sizing:border-box;"><span class="s" style="font-size:11px;transform:scaleX(0.89);transform-origin:50% 50%;line-height:15px"><span class="n">۷۶,۹۷۶,۵۱<i class="z"></i></span></span></div>
<div class="a" style="left:569px;top:487px;width:43px;height:18px;background:#fde4a2;color:#15406a;text-align:center;padding-top:0px;box-sizing:border-box;"><span class="s" style="font-size:11px;transform:scaleX(0.89);transform-origin:50% 50%;line-height:15px"><span class="n">۵۸,۷۷۴</span></span></div>
<div class="a" style="left:523px;top:487px;width:45px;height:18px;background:#fde4a2;color:#15406a;text-align:center;padding-top:0px;box-sizing:border-box;"><span class="s" style="font-size:11px;transform:scaleX(0.89);transform-origin:50% 50%;line-height:15px"><span class="n">۵۸,۱۶۴</span></span></div>
<div class="a" style="left:426px;top:487px;width:96px;height:18px;background:#fde4a2;color:#15406a;text-align:center;padding-top:0px;box-sizing:border-box;"><span class="s" style="font-size:11px;transform:scaleX(0.89);transform-origin:50% 50%;line-height:15px"><span class="n">۷,۴۳۷,۶۹۳,۸۸۳</span></span></div>
<div class="a" style="left:344px;top:487px;width:81px;height:18px;background:#fde4a2;color:#15406a;text-align:center;padding-top:0px;box-sizing:border-box;"><span class="s" style="font-size:11px;transform:scaleX(0.89);transform-origin:50% 50%;line-height:15px"><span class="n">۴۳۲,۶<i class="z"></i>۶,<i class="z"></i>۲۷</span></span></div>
<div class="a" style="left:300px;top:487px;width:43px;height:18px;background:#d3e5f6;color:#15406a;text-align:center;padding-top:0px;box-sizing:border-box;"><span class="s" style="font-size:11px;transform:scaleX(0.89);transform-origin:50% 50%;line-height:15px"><span class="n">۴۴,<i class="z"></i><i class="z"></i>۳</span></span></div>
<div class="a" style="left:254px;top:487px;width:45px;height:18px;background:#d3e5f6;color:#15406a;text-align:center;padding-top:0px;box-sizing:border-box;"><span class="s" style="font-size:11px;transform:scaleX(0.89);transform-origin:50% 50%;line-height:15px"><span class="n">۴۲,۴۶۴</span></span></div>
<div class="a" style="left:161px;top:487px;width:92px;height:18px;background:#fde4a2;color:#15406a;text-align:center;padding-top:0px;box-sizing:border-box;"><span class="s" style="font-size:11px;transform:scaleX(0.89);transform-origin:50% 50%;line-height:15px"><span class="n">۵,۱۱۷,۳۱۲,۱۴۷</span></span></div>
<div class="a" style="left:77px;top:487px;width:83px;height:18px;background:#d3e5f6;color:#15406a;text-align:center;padding-top:0px;box-sizing:border-box;"><span class="s" style="font-size:11px;transform:scaleX(0.89);transform-origin:50% 50%;line-height:15px"><span class="n">۲۱۷,۳<i class="z"></i>۱,۵۴۳</span></span></div>
<div class="a" style="left:20px;top:487px;width:56px;height:18px;background:#d3e5f6;color:#15406a;text-align:right;padding:0 2px 0 0;box-sizing:border-box;"><span class="s" style="font-size:11px;transform:scaleX(0.82);transform-origin:100% 50%;line-height:15px">تولید</span></div>
<div class="a" style="left:1536px;top:506px;width:83px;height:19px;background:#eeeeee;color:#15406a;text-align:right;padding:0 2px 0 0;box-sizing:border-box;"><span class="s" style="font-size:11px;transform:scaleX(0.82);transform-origin:100% 50%;line-height:15px">فروش قطعات ولوازم</span></div>
<div class="a" style="left:1504px;top:506px;width:31px;height:19px;background:#eeeeee;color:#15406a;text-align:right;padding:0 2px 0 0;box-sizing:border-box;"><span class="s" style="font-size:11px;transform:scaleX(0.82);transform-origin:100% 50%;line-height:15px">م ریال</span></div>
<div class="a" style="left:1460px;top:506px;width:43px;height:19px;background:#eeeeee;color:#15406a;text-align:center;padding-top:0px;box-sizing:border-box;"><span class="s" style="font-size:11px;transform:scaleX(0.89);transform-origin:50% 50%;line-height:15px"><span class="n"><i class="z"></i></span></span></div>
<div class="a" style="left:1413px;top:506px;width:46px;height:19px;background:#eeeeee;color:#15406a;text-align:center;padding-top:0px;box-sizing:border-box;"><span class="s" style="font-size:11px;transform:scaleX(0.89);transform-origin:50% 50%;line-height:15px"><span class="n">۲</span></span></div>
<div class="a" style="left:1321px;top:506px;width:91px;height:19px;background:#fde4a2;color:#15406a;text-align:center;padding-top:0px;box-sizing:border-box;"><span class="s" style="font-size:11px;transform:scaleX(0.89);transform-origin:50% 50%;line-height:15px"><span class="n">۳<i class="z"></i>۶,۷<i class="z"></i>۲,۵۱۱,<i class="z"></i><i class="z"></i><i class="z"></i>,<i class="z"></i><i class="z"></i><i class="z"></i></span></span></div>
<div class="a" style="left:1239px;top:506px;width:81px;height:19px;background:#eeeeee;color:#15406a;text-align:center;padding-top:0px;box-sizing:border-box;"><span class="s" style="font-size:11px;transform:scaleX(0.89);transform-origin:50% 50%;line-height:15px"><span class="n">۶۱۳,۴<i class="z"></i>۵,<i class="z"></i>۲۲</span></span></div>
<div class="a" style="left:1204px;top:506px;width:34px;height:19px;background:#eeeeee;color:#15406a;text-align:center;padding-top:0px;box-sizing:border-box;"><span class="s" style="font-size:11px;transform:scaleX(0.89);transform-origin:50% 50%;line-height:15px"><span class="n"><i class="z"></i></span></span></div>
<div class="a" style="left:1166px;top:506px;width:37px;height:19px;background:#eeeeee;color:#f20000;text-align:center;padding-top:0px;box-sizing:border-box;"><span class="s" style="font-size:11px;transform:scaleX(0.89);transform-origin:50% 50%;line-height:15px">(<span class="n">۲</span>)</span></div>
<div class="a" style="left:1106px;top:506px;width:59px;height:19px;background:#eeeeee;color:#15406a;text-align:center;padding-top:0px;box-sizing:border-box;"><span class="s" style="font-size:11px;transform:scaleX(0.89);transform-origin:50% 50%;line-height:15px"><span class="n"><i class="z"></i></span></span></div>
<div class="a" style="left:1062px;top:506px;width:43px;height:19px;background:#fde4a2;color:#15406a;text-align:center;padding-top:0px;box-sizing:border-box;"><span class="s" style="font-size:11px;transform:scaleX(0.89);transform-origin:50% 50%;line-height:15px"><span class="n"><i class="z"></i></span></span></div>
<div class="a" style="left:1017px;top:506px;width:44px;height:19px;background:#fde4a2;color:#15406a;text-align:center;padding-top:0px;box-sizing:border-box;"><span class="s" style="font-size:11px;transform:scaleX(0.89);transform-origin:50% 50%;line-height:15px"><span class="n"><i class="z"></i></span></span></div>
<div class="a" style="left:945px;top:506px;width:71px;height:19px;background:#fde4a2;color:#15406a;text-align:center;padding-top:0px;box-sizing:border-box;"></div>
<div class="a" style="left:864px;top:506px;width:80px;height:19px;background:#fde4a2;color:#15406a;text-align:center;padding-top:0px;box-sizing:border-box;"><span class="s" style="font-size:11px;transform:scaleX(0.89);transform-origin:50% 50%;line-height:15px"><span class="n">۶۱۳,۴<i class="z"></i>۵,<i class="z"></i>۲۲</span></span></div>
<div class="a" style="left:822px;top:506px;width:41px;height:19px;background:#eeeeee;color:#15406a;text-align:center;padding-top:0px;box-sizing:border-box;"></div>
<div class="a" style="left:782px;top:506px;width:39px;height:19px;background:#eeeeee;color:#15406a;text-align:center;padding-top:0px;box-sizing:border-box;"><span class="s" style="font-size:11px;transform:scaleX(0.89);transform-origin:50% 50%;line-height:15px"><span class="n">۱</span></span></div>
<div class="a" style="left:690px;top:506px;width:91px;height:19px;background:#fde4a2;color:#15406a;text-align:center;padding-top:0px;box-sizing:border-box;"><span class="s" style="font-size:11px;transform:scaleX(0.89);transform-origin:50% 50%;line-height:15px"><span class="n">۱۱<i class="z"></i>,۴۶۵,۳۴۹,<i class="z"></i><i class="z"></i><i class="z"></i>,<i class="z"></i><i class="z"></i><i class="z"></i></span></span></div>
<div class="a" style="left:613px;top:506px;width:76px;height:19px;background:#eeeeee;color:#15406a;text-align:center;padding-top:0px;box-sizing:border-box;"><span class="s" style="font-size:11px;transform:scaleX(0.89);transform-origin:50% 50%;line-height:15px"><span class="n">۱۱<i class="z"></i>,۴۶۵,۳۴۹</span></span></div>
<div class="a" style="left:569px;top:506px;width:43px;height:19px;background:#fde4a2;color:#15406a;text-align:center;padding-top:0px;box-sizing:border-box;"><span class="s" style="font-size:11px;transform:scaleX(0.89);transform-origin:50% 50%;line-height:15px"><span class="n"><i class="z"></i></span></span></div>
<div class="a" style="left:523px;top:506px;width:45px;height:19px;background:#fde4a2;color:#15406a;text-align:center;padding-top:0px;box-sizing:border-box;"><span class="s" style="font-size:11px;transform:scaleX(0.89);transform-origin:50% 50%;line-height:15px"><span class="n">۱</span></span></div>
<div class="a" style="left:426px;top:506px;width:96px;height:19px;background:#fde4a2;color:#15406a;text-align:center;padding-top:0px;box-sizing:border-box;"><span class="s" style="font-size:11px;transform:scaleX(0.89);transform-origin:50% 50%;line-height:15px"><span class="n">۷۲۳,۸۷<i class="z"></i>,۳۷۱,<i class="z"></i><i class="z"></i><i class="z"></i>,<i class="z"></i><i class="z"></i><i class="z"></i></span></span></div>
<div class="a" style="left:344px;top:506px;width:81px;height:19px;background:#fde4a2;color:#15406a;text-align:center;padding-top:0px;box-sizing:border-box;"><span class="s" style="font-size:11px;transform:scaleX(0.89);transform-origin:50% 50%;line-height:15px"><span class="n">۷۲۳,۸۷<i class="z"></i>,۳۷۱</span></span></div>
<div class="a" style="left:300px;top:506px;width:43px;height:19px;background:#eeeeee;color:#15406a;text-align:center;padding-top:0px;box-sizing:border-box;"></div>
<div class="a" style="left:254px;top:506px;width:45px;height:19px;background:#eeeeee;color:#15406a;text-align:center;padding-top:0px;box-sizing:border-box;"><span class="s" style="font-size:11px;transform:scaleX(0.89);transform-origin:50% 50%;line-height:15px"><span class="n">۱</span></span></div>
<div class="a" style="left:161px;top:506px;width:92px;height:19px;background:#fde4a2;color:#15406a;text-align:center;padding-top:0px;box-sizing:border-box;"><span class="s" style="font-size:11px;transform:scaleX(0.89);transform-origin:50% 50%;line-height:15px"><span class="n">۵<i class="z"></i><i class="z"></i>,<i class="z"></i>۹<i class="z"></i>,۸۶۲,<i class="z"></i><i class="z"></i><i class="z"></i>,<i class="z"></i><i class="z"></i><i class="z"></i></span></span></div>
<div class="a" style="left:77px;top:506px;width:83px;height:19px;background:#eeeeee;color:#15406a;text-align:center;padding-top:0px;box-sizing:border-box;"><span class="s" style="font-size:11px;transform:scaleX(0.89);transform-origin:50% 50%;line-height:15px"><span class="n">۵<i class="z"></i><i class="z"></i>,<i class="z"></i>۹<i class="z"></i>,۸۶۲</span></span></div>
<div class="a" style="left:20px;top:506px;width:56px;height:19px;background:#eeeeee;color:#15406a;text-align:right;padding:0 2px 0 0;box-sizing:border-box;"><span class="s" style="font-size:11px;transform:scaleX(0.82);transform-origin:100% 50%;line-height:15px">تولید</span></div>
<div class="a" style="left:1536px;top:526px;width:83px;height:32px;background:#d3e5f6;color:#15406a;text-align:right;padding:0 2px 0 0;box-sizing:border-box;"><span class="s" style="font-size:11px;transform:scaleX(0.82);transform-origin:100% 50%;line-height:13.5px">خودروهاي توليدي<br>تجاري نشده سايتها</span></div>
<div class="a" style="left:1504px;top:526px;width:31px;height:32px;background:#d3e5f6;color:#15406a;text-align:right;padding:0 2px 0 0;box-sizing:border-box;"><span class="s" style="font-size:11px;transform:scaleX(0.82);transform-origin:100% 50%;line-height:13.5px">دستگاه</span></div>
<div class="a" style="left:1460px;top:526px;width:43px;height:32px;background:#d3e5f6;color:#15406a;text-align:center;padding-top:0px;box-sizing:border-box;"><span class="s" style="font-size:11px;transform:scaleX(0.89);transform-origin:50% 50%;line-height:15px"><span class="n">۳,۸۴۴</span></span></div>
<div class="a" style="left:1413px;top:526px;width:46px;height:32px;background:#d3e5f6;color:#15406a;text-align:center;padding-top:0px;box-sizing:border-box;"><span class="s" style="font-size:11px;transform:scaleX(0.89);transform-origin:50% 50%;line-height:15px"><span class="n"><i class="z"></i></span></span></div>
<div class="a" style="left:1321px;top:526px;width:91px;height:32px;background:#fde4a2;color:#15406a;text-align:center;padding-top:0px;box-sizing:border-box;"><span class="s" style="font-size:11px;transform:scaleX(0.89);transform-origin:50% 50%;line-height:15px"><span class="n"><i class="z"></i></span></span></div>
<div class="a" style="left:1239px;top:526px;width:81px;height:32px;background:#d3e5f6;color:#15406a;text-align:center;padding-top:0px;box-sizing:border-box;"><span class="s" style="font-size:11px;transform:scaleX(0.89);transform-origin:50% 50%;line-height:15px"><span class="n"><i class="z"></i></span></span></div>
<div class="a" style="left:1204px;top:526px;width:34px;height:32px;background:#d3e5f6;color:#f20000;text-align:center;padding-top:0px;box-sizing:border-box;"><span class="s" style="font-size:11px;transform:scaleX(0.89);transform-origin:50% 50%;line-height:15px">(<span class="n">۷۶۸</span>)</span></div>
<div class="a" style="left:1166px;top:526px;width:37px;height:32px;background:#d3e5f6;color:#15406a;text-align:center;padding-top:0px;box-sizing:border-box;"><span class="s" style="font-size:11px;transform:scaleX(0.89);transform-origin:50% 50%;line-height:15px"><span class="n"><i class="z"></i></span></span></div>
<div class="a" style="left:1106px;top:526px;width:59px;height:32px;background:#d3e5f6;color:#15406a;text-align:center;padding-top:0px;box-sizing:border-box;"><span class="s" style="font-size:11px;transform:scaleX(0.89);transform-origin:50% 50%;line-height:15px"><span class="n"><i class="z"></i></span></span></div>
<div class="a" style="left:1062px;top:526px;width:43px;height:32px;background:#fde4a2;color:#15406a;text-align:center;padding-top:0px;box-sizing:border-box;"><span class="s" style="font-size:11px;transform:scaleX(0.89);transform-origin:50% 50%;line-height:15px"><span class="n">۳,<i class="z"></i>۷۶</span></span></div>
<div class="a" style="left:1017px;top:526px;width:44px;height:32px;background:#fde4a2;color:#15406a;text-align:center;padding-top:0px;box-sizing:border-box;"><span class="s" style="font-size:11px;transform:scaleX(0.89);transform-origin:50% 50%;line-height:15px"><span class="n"><i class="z"></i></span></span></div>
<div class="a" style="left:945px;top:526px;width:71px;height:32px;background:#fde4a2;color:#15406a;text-align:center;padding-top:0px;box-sizing:border-box;"><span class="s" style="font-size:11px;transform:scaleX(0.89);transform-origin:50% 50%;line-height:15px"><span class="n"><i class="z"></i></span></span></div>
<div class="a" style="left:864px;top:526px;width:80px;height:32px;background:#fde4a2;color:#15406a;text-align:center;padding-top:0px;box-sizing:border-box;"><span class="s" style="font-size:11px;transform:scaleX(0.89);transform-origin:50% 50%;line-height:15px"><span class="n"><i class="z"></i></span></span></div>
<div class="a" style="left:822px;top:526px;width:41px;height:32px;background:#d3e5f6;color:#15406a;text-align:center;padding-top:0px;box-sizing:border-box;"></div>
<div class="a" style="left:782px;top:526px;width:39px;height:32px;background:#d3e5f6;color:#15406a;text-align:center;padding-top:0px;box-sizing:border-box;"></div>
<div class="a" style="left:690px;top:526px;width:91px;height:32px;background:#fde4a2;color:#15406a;text-align:center;padding-top:0px;box-sizing:border-box;"><span class="s" style="font-size:11px;transform:scaleX(0.89);transform-origin:50% 50%;line-height:15px"><span class="n"><i class="z"></i></span></span></div>
<div class="a" style="left:613px;top:526px;width:76px;height:32px;background:#d3e5f6;color:#15406a;text-align:center;padding-top:0px;box-sizing:border-box;"><span class="s" style="font-size:11px;transform:scaleX(0.89);transform-origin:50% 50%;line-height:15px"><span class="n"><i class="z"></i></span></span></div>
<div class="a" style="left:569px;top:526px;width:43px;height:32px;background:#fde4a2;color:#15406a;text-align:center;padding-top:0px;box-sizing:border-box;"><span class="s" style="font-size:11px;transform:scaleX(0.89);transform-origin:50% 50%;line-height:15px"><span class="n">۳,<i class="z"></i>۷۶</span></span></div>
<div class="a" style="left:523px;top:526px;width:45px;height:32px;background:#fde4a2;color:#15406a;text-align:center;padding-top:0px;box-sizing:border-box;"><span class="s" style="font-size:11px;transform:scaleX(0.89);transform-origin:50% 50%;line-height:15px"><span class="n"><i class="z"></i></span></span></div>
<div class="a" style="left:426px;top:526px;width:96px;height:32px;background:#fde4a2;color:#15406a;text-align:center;padding-top:0px;box-sizing:border-box;"><span class="s" style="font-size:11px;transform:scaleX(0.89);transform-origin:50% 50%;line-height:15px"><span class="n"><i class="z"></i></span></span></div>
<div class="a" style="left:344px;top:526px;width:81px;height:32px;background:#fde4a2;color:#15406a;text-align:center;padding-top:0px;box-sizing:border-box;"><span class="s" style="font-size:11px;transform:scaleX(0.89);transform-origin:50% 50%;line-height:15px"><span class="n"><i class="z"></i></span></span></div>
<div class="a" style="left:300px;top:526px;width:43px;height:32px;background:#d3e5f6;color:#15406a;text-align:center;padding-top:0px;box-sizing:border-box;"><span class="s" style="font-size:11px;transform:scaleX(0.89);transform-origin:50% 50%;line-height:15px"><span class="n">۸,۹۷۷</span></span></div>
<div class="a" style="left:254px;top:526px;width:45px;height:32px;background:#d3e5f6;color:#15406a;text-align:center;padding-top:0px;box-sizing:border-box;"></div>
<div class="a" style="left:161px;top:526px;width:92px;height:32px;background:#fde4a2;color:#15406a;text-align:center;padding-top:0px;box-sizing:border-box;"><span class="s" style="font-size:11px;transform:scaleX(0.89);transform-origin:50% 50%;line-height:15px"><span class="n"><i class="z"></i></span></span></div>
<div class="a" style="left:77px;top:526px;width:83px;height:32px;background:#d3e5f6;color:#15406a;text-align:center;padding-top:0px;box-sizing:border-box;"><span class="s" style="font-size:11px;transform:scaleX(0.89);transform-origin:50% 50%;line-height:15px"><span class="n"><i class="z"></i></span></span></div>
<div class="a" style="left:20px;top:526px;width:56px;height:32px;background:#d3e5f6;color:#15406a;text-align:right;padding:0 2px 0 0;box-sizing:border-box;"><span class="s" style="font-size:11px;transform:scaleX(0.82);transform-origin:100% 50%;line-height:13.5px">تولید</span></div>
<div class="a" style="left:1536px;top:559px;width:83px;height:21px;background:#fde4a2;color:#15406a;text-align:right;padding:0 2px 0 0;box-sizing:border-box;"><span class="s" style="font-size:12px;transform:scaleX(0.82);transform-origin:100% 50%;line-height:15px">جمع فروش داخلی</span></div>
<div class="a" style="left:1504px;top:559px;width:31px;height:21px;background:#fde4a2;color:#15406a;text-align:right;padding:0 2px 0 0;box-sizing:border-box;"></div>
<div class="a" style="left:1460px;top:559px;width:43px;height:21px;background:#fde4a2;color:#15406a;text-align:center;padding-top:0px;box-sizing:border-box;"><span class="s" style="font-size:12px;transform:scaleX(0.9);transform-origin:50% 50%;line-height:15px"><span class="n">۳۲۳,<i class="z"></i>۸۵</span></span></div>
<div class="a" style="left:1413px;top:559px;width:46px;height:21px;background:#fde4a2;color:#15406a;text-align:center;padding-top:0px;box-sizing:border-box;"><span class="s" style="font-size:12px;transform:scaleX(0.9);transform-origin:50% 50%;line-height:15px"><span class="n">۳<i class="z"></i>۷,۸۷۳</span></span></div>
<div class="a" style="left:1321px;top:559px;width:91px;height:21px;background:#fde4a2;color:#15406a;text-align:center;padding-top:0px;box-sizing:border-box;"></div>
<div class="a" style="left:1239px;top:559px;width:81px;height:21px;background:#fde4a2;color:#15406a;text-align:center;padding-top:0px;box-sizing:border-box;"><span class="s" style="font-size:12px;transform:scaleX(0.9);transform-origin:50% 50%;line-height:15px"><span class="n">۲,۶<i class="z"></i><i class="z"></i>,۵۱۴,۴۳۲</span></span></div>
<div class="a" style="left:1204px;top:559px;width:34px;height:21px;background:#fde4a2;color:#f20000;text-align:center;padding-top:0px;box-sizing:border-box;"><span class="s" style="font-size:12px;transform:scaleX(0.9);transform-origin:50% 50%;line-height:15px">(<span class="n">۷۶۸</span>)</span></div>
<div class="a" style="left:1166px;top:559px;width:37px;height:21px;background:#fde4a2;color:#f20000;text-align:center;padding-top:0px;box-sizing:border-box;"><span class="s" style="font-size:12px;transform:scaleX(0.9);transform-origin:50% 50%;line-height:15px">(<span class="n">۲</span>)</span></div>
<div class="a" style="left:1106px;top:559px;width:59px;height:21px;background:#fde4a2;color:#15406a;text-align:center;padding-top:0px;box-sizing:border-box;"><span class="s" style="font-size:12px;transform:scaleX(0.9);transform-origin:50% 50%;line-height:15px"><span class="n"><i class="z"></i></span></span></div>
<div class="a" style="left:1062px;top:559px;width:43px;height:21px;background:#fde4a2;color:#15406a;text-align:center;padding-top:0px;box-sizing:border-box;"><span class="s" style="font-size:12px;transform:scaleX(0.9);transform-origin:50% 50%;line-height:15px"><span class="n">۳۲۲,۳۱۷</span></span></div>
<div class="a" style="left:1017px;top:559px;width:44px;height:21px;background:#fde4a2;color:#15406a;text-align:center;padding-top:0px;box-sizing:border-box;"><span class="s" style="font-size:12px;transform:scaleX(0.9);transform-origin:50% 50%;line-height:15px"><span class="n">۳<i class="z"></i>۷,۸۷۱</span></span></div>
<div class="a" style="left:945px;top:559px;width:71px;height:21px;background:#fde4a2;color:#15406a;text-align:center;padding-top:0px;box-sizing:border-box;"></div>
<div class="a" style="left:864px;top:559px;width:80px;height:21px;background:#fde4a2;color:#15406a;text-align:center;padding-top:0px;box-sizing:border-box;"><span class="s" style="font-size:12px;transform:scaleX(0.9);transform-origin:50% 50%;line-height:15px"><span class="n">۲,۶<i class="z"></i><i class="z"></i>,۵۱۴,۴۳۲</span></span></div>
<div class="a" style="left:822px;top:559px;width:41px;height:21px;background:#fde4a2;color:#15406a;text-align:center;padding-top:0px;box-sizing:border-box;"><span class="s" style="font-size:12px;transform:scaleX(0.9);transform-origin:50% 50%;line-height:15px"><span class="n">۵۸,۳۳۷</span></span></div>
<div class="a" style="left:782px;top:559px;width:39px;height:21px;background:#fde4a2;color:#15406a;text-align:center;padding-top:0px;box-sizing:border-box;"><span class="s" style="font-size:12px;transform:scaleX(0.9);transform-origin:50% 50%;line-height:15px"><span class="n">۶۱,۹۸۶</span></span></div>
<div class="a" style="left:690px;top:559px;width:91px;height:21px;background:#fde4a2;color:#15406a;text-align:center;padding-top:0px;box-sizing:border-box;"></div>
<div class="a" style="left:613px;top:559px;width:76px;height:21px;background:#fde4a2;color:#15406a;text-align:center;padding-top:0px;box-sizing:border-box;"><span class="s" style="font-size:12px;transform:scaleX(0.9);transform-origin:50% 50%;line-height:15px"><span class="n">۵۶۲,<i class="z"></i>۵۴,۱۹۱</span></span></div>
<div class="a" style="left:569px;top:559px;width:43px;height:21px;background:#fde4a2;color:#15406a;text-align:center;padding-top:0px;box-sizing:border-box;"><span class="s" style="font-size:12px;transform:scaleX(0.9);transform-origin:50% 50%;line-height:15px"><span class="n">۳۸<i class="z"></i>,۶۵۴</span></span></div>
<div class="a" style="left:523px;top:559px;width:45px;height:21px;background:#fde4a2;color:#15406a;text-align:center;padding-top:0px;box-sizing:border-box;"><span class="s" style="font-size:12px;transform:scaleX(0.9);transform-origin:50% 50%;line-height:15px"><span class="n">۳۶۹,۸۵۷</span></span></div>
<div class="a" style="left:426px;top:559px;width:96px;height:21px;background:#fde4a2;color:#15406a;text-align:center;padding-top:0px;box-sizing:border-box;"></div>
<div class="a" style="left:344px;top:559px;width:81px;height:21px;background:#fde4a2;color:#15406a;text-align:center;padding-top:0px;box-sizing:border-box;"><span class="s" style="font-size:12px;transform:scaleX(0.9);transform-origin:50% 50%;line-height:15px"><span class="n">۳,۱۶۲,۵۶۸,۶۲۳</span></span></div>
<div class="a" style="left:300px;top:559px;width:43px;height:21px;background:#fde4a2;color:#15406a;text-align:center;padding-top:0px;box-sizing:border-box;"><span class="s" style="font-size:12px;transform:scaleX(0.9);transform-origin:50% 50%;line-height:15px"><span class="n">۳۳۶,<i class="z"></i>۲۲</span></span></div>
<div class="a" style="left:254px;top:559px;width:45px;height:21px;background:#fde4a2;color:#15406a;text-align:center;padding-top:0px;box-sizing:border-box;"><span class="s" style="font-size:12px;transform:scaleX(0.9);transform-origin:50% 50%;line-height:15px"><span class="n">۳۲۴,۴۷۸</span></span></div>
<div class="a" style="left:161px;top:559px;width:92px;height:21px;background:#fde4a2;color:#15406a;text-align:center;padding-top:0px;box-sizing:border-box;"></div>
<div class="a" style="left:77px;top:559px;width:83px;height:21px;background:#fde4a2;color:#15406a;text-align:center;padding-top:0px;box-sizing:border-box;"><span class="s" style="font-size:12px;transform:scaleX(0.9);transform-origin:50% 50%;line-height:15px"><span class="n">۱,۹۲۵,۵۸۳,۸۵۳</span></span></div>
<div class="a" style="left:20px;top:559px;width:56px;height:21px;background:#fde4a2;color:#15406a;text-align:right;padding:0 2px 0 0;box-sizing:border-box;"></div>
</body>
</html>
